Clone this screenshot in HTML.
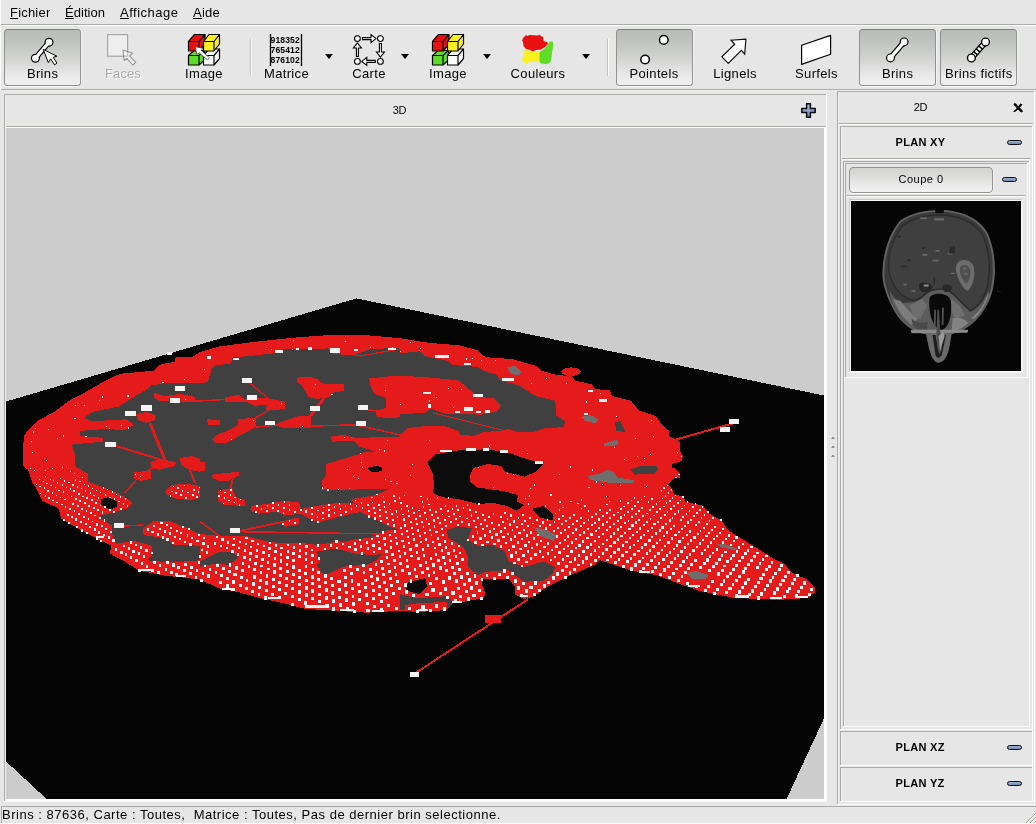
<!DOCTYPE html>
<html><head><meta charset="utf-8">
<style>
html,body{margin:0;padding:0;}
body{will-change:transform;width:1036px;height:824px;overflow:hidden;background:#e6e6e6;font-family:"Liberation Sans",sans-serif;font-size:13px;color:#000;position:relative;}
.a{position:absolute;}
.hl{position:absolute;height:1px;}
.vl{position:absolute;width:1px;}
.dk{background:#a9aca7;}
.wt{background:#fbfbfb;}
.menu{position:absolute;top:5px;font-size:13px;line-height:15px;letter-spacing:0.2px;white-space:nowrap;}
.menu u{text-decoration:underline;text-underline-offset:1px;text-decoration-thickness:1px;text-decoration-skip-ink:none;}
.tl{position:absolute;top:66px;font-size:13px;line-height:15px;text-align:center;white-space:nowrap;letter-spacing:0.35px;}
.tb{position:absolute;top:29px;height:55px;border:1px solid #8f928d;border-top-color:#7d807b;border-radius:3.5px;background:linear-gradient(#b9bbb8 0%,#c1c3c0 22%,#d4d5d3 55%,#e7e7e7 80%,#f0f0f0 100%);box-shadow:0 1px 0 #fafafa,1px 0 0 #f4f4f4;}
.arr{position:absolute;top:54px;width:0;height:0;border-left:4.5px solid transparent;border-right:4.5px solid transparent;border-top:5px solid #000;}
.ph{position:absolute;font-weight:bold;font-size:11px;line-height:13px;white-space:nowrap;letter-spacing:0.32px;}
.minus{position:absolute;width:13px;height:3px;border:1px solid #0c0c10;border-radius:2.5px;background:linear-gradient(#9fb3d0,#6f88ad);}
</style></head><body>
<!-- window edge -->
<div class="vl wt" style="left:0;top:0;height:90px"></div>
<!-- menubar -->
<div class="menu" style="left:10px"><u>F</u>ichier</div>
<div class="menu" style="left:65px;letter-spacing:0.05px"><u>É</u>dition</div>
<div class="menu" style="left:120px;letter-spacing:0.5px"><u>A</u>ffichage</div>
<div class="menu" style="left:193px"><u>A</u>ide</div>
<div class="hl dk" style="left:1px;top:24px;width:1035px"></div>
<div class="hl wt" style="left:1px;top:25px;width:1035px"></div>
<!-- toolbar -->
<div class="hl dk" style="left:1px;top:89px;width:1035px"></div>
<div class="hl" style="left:1px;top:90px;width:1035px;background:#f0f0f0"></div>
<div id="toolbar">
<div class="tb" style="left:4px;width:75px"></div>
<div class="tb" style="left:616px;width:75px"></div>
<div class="tb" style="left:859px;width:75px"></div>
<div class="tb" style="left:940px;width:75px"></div>
<div class="vl" style="left:250px;top:39px;height:37px;background:#c4c4c4"></div><div class="vl wt" style="left:251px;top:39px;height:37px"></div>
<div class="vl" style="left:607px;top:39px;height:37px;background:#c4c4c4"></div><div class="vl wt" style="left:608px;top:39px;height:37px"></div>
<div class="tl" style="left:12.600px;width:60px">Brins</div>
<div class="tl" style="left:93px;width:60px;letter-spacing:0.1px;color:#a9a9a9;text-shadow:1px 1px 0 #fff">Faces</div>
<div class="tl" style="left:174px;width:60px">Image</div>
<div class="tl" style="left:256.5px;width:60px">Matrice</div>
<div class="tl" style="left:339px;width:60px">Carte</div>
<div class="tl" style="left:418px;width:60px">Image</div>
<div class="tl" style="left:508px;width:60px">Couleurs</div>
<div class="tl" style="left:624px;width:60px">Pointels</div>
<div class="tl" style="left:705px;width:60px">Lignels</div>
<div class="tl" style="left:786.5px;width:60px">Surfels</div>
<div class="tl" style="left:867.6px;width:60px">Brins</div>
<div class="tl" style="left:938.8px;width:80px">Brins fictifs</div>
<div class="arr" style="left:325px"></div>
<div class="arr" style="left:401px"></div>
<div class="arr" style="left:483px"></div>
<div class="arr" style="left:582px"></div>
<svg class="a" style="left:0;top:26px" width="1036" height="63" viewBox="0 26 1036 63">
<defs>
<g id="cubes" stroke="#000" stroke-width="1.2" stroke-linejoin="round">
 <path d="M0.5,22.5h10.5v9.5h-10.5z M0.5,22.5l5.5,-5h10.5l-5.5,5z M11,22.5l5.5,-5v9.5l-5.5,5z" fill="#5fdc28"/>
 <path d="M15.5,22.5h10.5v9.5h-10.5z M15.5,22.5l5.5,-6.5h10.5l-5.5,6.5z M26,22.5l5.500,-6.5v9.5l-5.5,6.5z" fill="#fff"/>
 <path d="M0.500,8.500h10.500v9.500h-10.500z M0.500,8.500l6,-7h10.500l-6,7z M11,8.500l6,-7v9.500l-6,7z" fill="#e81010"/>
 <path d="M15.500,8.500h10.500v9.500h-10.500z M15.500,8.500l5.500,-7h10.500l-5.500,7z M26,8.500l5.500,-7v9.500l-5.500,7z" fill="#f8f020"/>
</g>
<g id="cursor"><path d="M0,0 L1.200,10.500 L3.800,8.300 L9.800,15 L12.800,12.300 L6.600,5.800 L9.600,3.200 Z" fill="#fff" stroke="#000" stroke-width="1.1" stroke-linejoin="round"/></g>
<g id="bone"><path d="M-6.800,8 L6.800,-8" stroke="#000" stroke-width="5.600" stroke-linecap="round"/><circle cx="6.800" cy="-8" r="4.500" fill="#000"/><circle cx="-6.800" cy="8" r="4.500" fill="#000"/><path d="M-6.800,8 L6.800,-8" stroke="#fff" stroke-width="3.300" stroke-linecap="round"/><circle cx="6.800" cy="-8" r="3.300" fill="#fff"/><circle cx="-6.800" cy="8" r="3.300" fill="#fff"/></g>
</defs>
<!-- Brins -->
<use href="#bone" x="42.200" y="50.200"/>
<path d="M43.200,49.400 L48.300,62.600 L50.600,58.900 L54.600,64.900 L57,63 L53.200,57.300 L56.900,56.200 Z" fill="#fff" stroke="#000" stroke-width="1" stroke-linejoin="round"/>
<!-- Faces -->
<rect x="107.600" y="34.600" width="20" height="21.600" fill="#eeeeee" stroke="#a6a6a6" stroke-width="1.200"/>
<g opacity="0.350"><use href="#cursor" x="123" y="50"/></g>
<!-- Image 1 -->
<use href="#cubes" x="188" y="33"/>
<g transform="translate(195,46.700) rotate(-4)"><path d="M0,0 L1.500,8.200 L3.600,6.200 L11.500,14 L13.600,12 L5.800,4 L7.800,2 Z" fill="#fff" stroke="#444" stroke-width="0.800"/></g>
<!-- Matrice -->
<path d="M270.500,34v32 M301.500,34v32" stroke="#000" stroke-width="1.300"/>
<g font-family="Liberation Sans" font-size="8.600" font-weight="bold" letter-spacing="0.100" fill="#000"><text x="270.600" y="43">918352</text><text x="270.600" y="53">765412</text><text x="270.600" y="63">876102</text></g>
<!-- Carte -->
<g fill="#fff" stroke="#000" stroke-width="1.100" stroke-linejoin="miter">
<circle cx="357.400" cy="38.600" r="2.900"/><circle cx="380.400" cy="38.600" r="2.900"/><circle cx="357.400" cy="61.400" r="2.900"/><circle cx="380.400" cy="61.400" r="2.900"/>
<path d="M362.500,37.600h8.500v-3l5,4l-5,4v-3h-8.500z"/>
<path d="M375.300,60.400h-8.500v-3l-5,4l5,4v-3h8.500z"/>
<path d="M379.400,43.500v8.500h-3l4,5l4,-5h-3v-8.500z"/>
<path d="M356.400,56.500v-8.500h-3l4,-5l4,5h-3v8.500z"/>
</g>
<!-- Image 2 -->
<use href="#cubes" x="432" y="33"/>
<!-- Couleurs -->
<path d="M526,35 L527.500,36 L529.500,35 L538,35.500 L539.500,34.500 L541,36 L543,37 L543.500,41 L547,42 L548,44 L545,47 L541,49.500 L536,50 L532.500,51.500 L530,50 L526,49 L523.500,46 L523,42 L522,41 L523,38 Z" fill="#e81010"/>
<path d="M524.500,50.500 L527,50 L531,51.500 L535,52 L539.500,52 L539.500,61.500 L533,62 L529,62 L527,64 L524,62.500 L522,60 L523,57 L524,54 Z" fill="#f8f020"/>
<path d="M551,41 L553,42 L553,47 L552,53 L551.500,58 L550,63 L546,64 L541,63.500 L539.500,62 L539.500,52 L543,50 L546,47 L549,43 Z" fill="#5fdc28"/>
<!-- Pointels -->
<circle cx="663.800" cy="39.900" r="4.300" fill="#fff" stroke="#000" stroke-width="1.500"/>
<circle cx="645.100" cy="59.500" r="4.300" fill="#fff" stroke="#000" stroke-width="1.500"/>
<!-- Lignels -->
<path d="M721.900,56.800 L734.700,44.300 L731.100,40.200 L745.900,39.200 L744.700,54 L741.300,50.400 L728.300,63.400 Z" fill="#fff" stroke="#111" stroke-width="1.200" stroke-linejoin="miter"/>
<!-- Surfels -->
<path d="M801.600,45.300 L830.600,35.400 L830.600,54.300 L801.600,64.400 Z" fill="#fff" stroke="#000" stroke-width="1.200" stroke-linejoin="round"/>
<!-- Brins right -->
<use href="#bone" x="897.300" y="49.900"/>
<!-- Brins fictifs -->
<g>
<path d="M971.400,58 L985.500,42" stroke="#000" stroke-width="6.200"/>
<path d="M971.400,58 L985.500,42" stroke="#fff" stroke-width="3.600" stroke-dasharray="2.300 1.500" stroke-dashoffset="-3.300"/>
<circle cx="985.500" cy="42" r="3.900" fill="#fff" stroke="#000" stroke-width="1.400"/><circle cx="971.400" cy="58" r="3.900" fill="#fff" stroke="#000" stroke-width="1.400"/>
</g>
</svg>
</div>
<!-- 3D frame -->
<div id="frame3d">
<!-- 3D frame: outer x4..826, y94..802 -->
<div class="hl dk" style="left:4px;top:94px;width:822px"></div>
<div class="vl dk" style="left:4px;top:94px;height:707px"></div>
<div class="vl wt" style="left:826px;top:94px;height:708px"></div>
<div class="hl wt" style="left:4px;top:801px;width:823px"></div>
<div class="vl" style="left:5px;top:95px;height:705px;background:#ededed"></div>
<div class="a" style="left:379.5px;top:104px;width:40px;text-align:center;font-size:11px;line-height:13px;letter-spacing:-0.3px">3D</div>
<div class="hl dk" style="left:6px;top:126px;width:819px"></div>
<div class="hl wt" style="left:6px;top:127px;width:819px"></div>
<div class="vl wt" style="left:824px;top:128px;height:673px"></div><div class="vl wt" style="left:825px;top:128px;height:673px"></div>
<div class="hl wt" style="left:6px;top:799px;width:820px;height:2px"></div>
<svg class="a" style="left:801px;top:103px" width="15" height="15" viewBox="0 0 15 15"><defs><linearGradient id="pg" x1="0" y1="0" x2="0" y2="1"><stop offset="0" stop-color="#a9bcd8"/><stop offset="1" stop-color="#6c86ad"/></linearGradient></defs><path d="M5.600,0.800h3.800v4.800h4.800v3.800h-4.800v4.800h-3.800v-4.800h-4.800v-3.800h4.800z" fill="url(#pg)" stroke="#0a0c12" stroke-width="1.500" stroke-linejoin="round"/></svg>
<div id="gl" class="a" style="left:6px;top:128px;width:818px;height:671px;background:#cccccc;overflow:hidden">
<svg class="a" style="left:0;top:0" width="818" height="671" viewBox="6 128 818 671" shape-rendering="crispEdges">
<path d="M6,401.5 L356.4,298.4 L824,395.5 L824,718.4 L786.6,799 L46.6,799 L6,761.4Z" fill="#050505"/>
<path d="M23.3,444.6 L24.3,434.9 L36.9,421.3 L54.4,411.6 L71.8,398.9 L85.4,392.1 L104.9,380.9 L120.4,373.7 L153.4,370.8 L161.2,364 L174.8,362 L175.7,357.2 L192.2,357.2 L200,352 L219.4,346.5 L248.5,342.6 L277.7,339.3 L297,337.4 L324.3,335.4 L369,335.4 L400,338.2 L427.2,342.6 L460.2,345.5 L477.7,350.4 L485.4,357.2 L512.6,359.1 L535.9,365.9 L541.7,370.8 L555.3,374.7 L572.8,376.6 L574.8,380.5 L592.2,384.4 L594.2,388.3 L600,389.5 L609.7,390.1 L611.7,395.9 L631,400.8 L638.8,410.5 L656.3,416.3 L662.1,425 L669,430.9 L669,435.7 L679.6,441.6 L680.6,453.2 L683,455 L681.6,461 L671.8,463.9 L672.2,467.8 L675.7,468.7 L679.6,473.6 L679.6,477.5 L673.8,478.4 L668,484.3 L671.8,488.2 L673.8,494 L683.5,496.9 L685.4,501.7 L702.9,505.6 L708.7,513.4 L721,520 L726.6,527.7 L731,532.2 L745.4,541 L759.9,549.9 L775.4,559.9 L784.3,563.3 L791,572.1 L807.6,579.9 L815.4,587.7 L815.4,592.1 L807.6,598 L777.6,599.9 L755.4,598.8 L733.2,597.7 L699.9,591 L677.7,583.2 L657.7,575.5 L628.9,569.9 L600,560 L594.2,565.1 L570.9,574.9 L547.6,586.5 L534,596.2 L524.3,599.1 L514.6,594.3 L514.6,586.5 L508.7,578.7 L483.5,578.7 L481.6,584.6 L485.4,592.3 L483.5,598.2 L450.5,604 L446.6,607.9 L415.5,611.7 L400,610.8 L367,612.7 L335.9,610.8 L304.9,608.8 L287.4,604 L264.1,599.1 L238.8,592.3 L219.4,588.4 L200,579.7 L186.4,577.8 L165,575.8 L151.5,572.9 L139.8,571 L124.3,561.3 L109.7,553.5 L111.7,545.7 L101,540.9 L77.7,528.3 L61.2,518.5 L58.3,507.9 L42.7,501.1 L37.9,491.4 L32,481.7 L28.2,470 L22.9,465.9Z" fill="#e51a1a"/>
<ellipse cx="570.9" cy="371.7" rx="9.7" ry="4.3" fill="#e51a1a"/>
<path d="M151.5,385.3 L165,383.4 L200,383 L207.8,382.4 L211.7,368.8 L215.5,365 L231,364 L233,357.2 L248.5,356.2 L273.8,353.3 L281.6,349.4 L308.7,349.4 L328.2,348.4 L332,353.3 L345.6,355.2 L359.2,353.3 L369,349.4 L400,347.5 L400,353.3 L419.4,351.4 L425.2,356.2 L448.5,361.1 L452.4,365 L477.7,366.9 L483.5,370.8 L497.1,374.7 L499,379.5 L520.4,386.3 L535.9,396 L555.3,400.9 L556.3,415.4 L565,421.3 L564.1,427.1 L545.6,428.1 L534,431.9 L518.4,432.5 L508.7,429 L501,431 L483.5,431.9 L473.8,435.8 L460.2,434.9 L458.3,431 L444.7,426.1 L425.2,426.1 L407.8,428 L400,434.9 L400,530.2 L388.3,530 L370,538 L355.3,539 L345,542 L335.9,541 L326,543.8 L316.5,544.8 L301,542.8 L277.7,542.8 L264,540.9 L246.6,536 L219.4,536 L200,534 L200,560.3 L174.8,562.2 L155.3,561.3 L147.6,560.3 L151.5,555.4 L151.5,545.7 L134,540.9 L116.5,543.8 L112.6,536 L111.7,525.3 L101,518.5 L99,515.6 L112.6,512.7 L126.2,508.8 L133,503 L126.2,498.1 L118.4,493.3 L108.7,489.4 L88.3,481.7 L88.3,470 L87.4,473.7 L74.8,466 L74.8,454.3 L71.8,444.6 L102.9,441.7 L102.9,437.8 L79.6,435.8 L80.6,431 L102.9,429 L124.3,430 L134,425 L126.2,419.3 L108.7,420.3 L91.3,421.3 L84.5,417.4 L93.2,411.6 L118.4,406.7 L132,398 L145.6,390.2Z" fill="#404040"/>
<path d="M446.6,530.2 L458.3,526.3 L471.8,528.3 L468,539.9 L477.7,545.7 L493.2,544.8 L504.9,551.6 L508.7,561.3 L524.3,567.1 L543.7,561.3 L555.3,567.1 L551.5,574.9 L543.7,580.7 L524.3,581.7 L514.6,574.9 L508.7,570 L485.4,571.9 L477.7,574.9 L468,567.1 L468,557.4 L464.1,547.7 L448.5,538Z" fill="#404040"/>
<path d="M316.5,551.6 L335.9,548.6 L355.3,553.5 L374.8,555.4 L382.5,553.5 L374.8,561.3 L365,565.1 L345.6,566.1 L334,571 L324.3,575.8 L316.5,565.1 L320.4,561.3Z" fill="#404040"/>
<path d="M200,561.3 L219.4,551.6 L233,552.5 L238.8,557.4 L229.1,565.1 L217.5,563.2 L200,567Z" fill="#404040"/>
<path d="M400,594.3 L415.5,598.2 L446.6,596.2 L454.4,602 L446.6,609.8 L419.4,611.7 L400,609.8Z" fill="#404040"/>
<path d="M400,464 L413.6,464 L413.6,477.6 L400,477.6Z" fill="#404040"/>
<path d="M630.1,469.7 L638.8,466.4 L656.3,465.8 L658.3,468.7 L654.4,473.6 L635,474.6Z" fill="#404040"/>
<path d="M615.1,422.1 L620,421 L625.2,431.8 L616,431Z" fill="#404040"/>
<path d="M507,367 L515,366 L522,372 L517,375.6 L510,373Z" fill="#6e6e6e"/>
<path d="M580.5,417 L590,415 L598.5,419 L596,423.4 L586,421Z" fill="#6e6e6e"/>
<path d="M600,473.6 L607.8,469.7 L613.6,471.7 L617.5,477.5 L634,480.4 L633,483.3 L613.6,483.3 L600,481.4 L590,480 L588,476Z" fill="#6e6e6e"/>
<path d="M603.9,443.5 L617.5,439.6 L618.4,443.5 L613.6,446.4 L603.9,446.4Z" fill="#6e6e6e"/>
<path d="M534,527.3 L547.6,530.2 L557.3,536 L553.4,540.9 L539.8,536Z" fill="#6e6e6e"/>
<path d="M686.6,573 L697,571 L708.8,575 L706,578.8 L692,578.8Z" fill="#6e6e6e"/>
<path d="M715.5,543.3 L726,544.5 L737.7,549 L736,550.5 L722,547.5Z" fill="#6e6e6e"/>
<path d="M297.1,377.6 L308.7,376.6 L318.4,379.5 L321.4,383.4 L343.7,384.4 L343.7,391.2 L334,392.1 L330.1,397 L316.5,399 L308.7,397 L304.9,390.2 L301,384.4 L297.1,382.4Z" fill="#e51a1a"/>
<path d="M369,378.5 L386.4,376.6 L400,375.6 L431.1,377.6 L458.3,380.5 L466,386.3 L477.7,397 L493.2,398 L501,405.7 L497.1,411.6 L477.7,415.4 L473.8,413.5 L444.7,413.5 L431.1,408.6 L425.2,412.5 L400,414.5 L400,417.4 L386.4,418.3 L376.7,416.4 L375.7,411.6 L386.4,407.7 L386.4,398 L374.8,394.1 L370.9,386.3Z" fill="#e51a1a"/>
<path d="M225.2,397 L238.8,395 L244.7,399 L268,398 L285.4,401.8 L284.5,408.6 L273.8,410.6 L266,409.6 L267,404.8 L254.4,405.7 L246.6,401.8 L225.2,401.8Z" fill="#e51a1a"/>
<path d="M277.7,423.2 L297.1,416.4 L310.7,415.4 L310.7,428 L283.5,428 L277.7,426.1Z" fill="#e51a1a"/>
<path d="M237.9,419.3 L256.3,417.4 L256.3,427 L244.7,433 L225.2,443.6 L215.5,442.6 L211.7,439.7 L216.5,434.9 L227.2,431 L237.9,425.1Z" fill="#e51a1a"/>
<path d="M206.8,419.3 L220.4,420 L220.4,425.1 L208,424.5Z" fill="#e51a1a"/>
<path d="M200,462 L205,462 L205,471 L200,471Z" fill="#e51a1a"/>
<path d="M136,414 L146,412 L156,415 L155,420 L146,423 L138,420Z" fill="#e51a1a"/>
<path d="M154,393 L165,396 L180,394 L195,397 L195,401 L180,402 L160,401 L154,398Z" fill="#e51a1a"/>
<path d="M150,462 L160,459 L176,462 L175,466 L165,468 L160,470 L152,468Z" fill="#e51a1a"/>
<path d="M134,472 L150.5,471 L150.5,479 L140,481 L134,479Z" fill="#e51a1a"/>
<path d="M180,458 L192,456 L200,459 L200,472 L190,470 L181,465Z" fill="#e51a1a"/>
<path d="M330.1,436.8 L343.7,434.9 L355.3,437.8 L400,436.8 L400,434.9 L407.8,428 L425.2,426.1 L444.7,426.1 L458.3,431 L460.2,434.9 L473.8,435.8 L483.5,431.9 L501,431 L508.7,429 L518.4,432.5 L520,450 L435,454.3 L427.2,462 L433,473.7 L434,490 L400,490 L400,530.2 L388.3,526.3 L374.8,518.5 L361.2,512.7 L351.5,499.1 L374.8,495.2 L390,489 L322.3,490 L322.3,480.5 L326.2,475.6 L326.2,464 L345.6,458.2 L365,452.3 L374.8,451.4 L359.2,446.5 L353.4,440.7 L332,441.7Z" fill="#e51a1a"/>
<path d="M250.5,505.9 L266,504 L283.5,501.1 L299,502 L301,508.8 L316.5,505.9 L335.9,503 L351.5,503 L361.2,505 L361.2,511.7 L339.8,516.6 L318.4,522.4 L308.7,518.5 L301,513.7 L285.4,515.6 L277.7,511.7 L258.3,513.7 L250.5,510.8Z" fill="#e51a1a"/>
<path d="M211.7,474.7 L238.8,471.7 L238.8,475.6 L233,478.5 L227.2,481.5 L217.5,480.5 L211.7,477.6Z" fill="#e51a1a"/>
<path d="M218.4,490 L232,488.4 L236,497 L244.7,500 L244.7,505.9 L225,505 L218.4,501Z" fill="#e51a1a"/>
<path d="M165,491 L172,485 L185,483.6 L200,486 L200,498 L190,500 L178,499 L168,496Z" fill="#e51a1a"/>
<path d="M142.7,528.3 L153.4,521.5 L168.9,520.5 L186.4,528.3 L200,534 L200,545.7 L174.8,544.8 L163.1,538 L143.7,535Z" fill="#e51a1a"/>
<path d="M290,520 L299,518 L299,524 L285,527 L283,524Z" fill="#e51a1a"/>
<path d="M405,605 L420,603 L447,602 L447,610 L419.4,612 L405,611Z" fill="#e51a1a"/>
<path d="M435,454.3 L458.3,450.4 L483.5,449.4 L504.9,451.4 L524.3,458.2 L543.7,464 L535.9,471.7 L524.3,476.6 L504.9,471.7 L501,465.9 L487.4,464 L473.8,467.9 L469.9,475.6 L469.9,481.7 L477.7,487.5 L504.9,491.4 L518.4,495.2 L516.5,501.1 L524.3,505 L516.5,510.8 L506.8,505.9 L493.2,503 L477.7,504 L458.3,499.1 L442.7,497.2 L433,493.3 L434,485.5 L433,473.7 L427.2,462Z" fill="#0c0c0c"/>
<path d="M532,508.8 L543.7,505.9 L553.4,514.7 L553.4,520.5 L539.8,517.6Z" fill="#0c0c0c"/>
<path d="M407.8,582.6 L425.2,577.8 L427.2,586.5 L419.4,594.3 L405.8,590.4Z" fill="#0c0c0c"/>
<path d="M101,499.1 L108.7,497.2 L116.5,501.1 L116.5,506.9 L110.7,509.8 L101,505Z" fill="#0c0c0c"/>
<path d="M367,468 L375,466 L382.5,467 L382,471 L372,472.5Z" fill="#0c0c0c"/>
<path d="M200,400.9 L225.2,399.5" stroke="#e51a1a" stroke-width="1.5"/>
<path d="M246.6,380.5 L268,398" stroke="#e51a1a" stroke-width="1.5"/>
<path d="M310.7,415.4 L324.3,398" stroke="#e51a1a" stroke-width="3"/>
<path d="M310.7,426.1 L355.3,424.8" stroke="#e51a1a" stroke-width="1.5"/>
<path d="M355.3,424.8 L400,434.9" stroke="#e51a1a" stroke-width="1.5"/>
<path d="M256.3,417.4 L270,409.6" stroke="#e51a1a" stroke-width="1.5"/>
<path d="M256.3,427 L277.7,425" stroke="#e51a1a" stroke-width="1.5"/>
<path d="M233,478.5 L230,490" stroke="#e51a1a" stroke-width="2"/>
<path d="M135.9,480.7 L124.3,493.3" stroke="#e51a1a" stroke-width="1.5"/>
<path d="M124.3,526 L143,525" stroke="#e51a1a" stroke-width="1.5"/>
<path d="M239.8,531 L299,518.5" stroke="#e51a1a" stroke-width="2"/>
<path d="M239.8,531.7 L394.2,534.1" stroke="#e51a1a" stroke-width="1.5"/>
<path d="M200,521.5 L219.4,536" stroke="#e51a1a" stroke-width="1.5"/>
<path d="M675.7,439.6 L734,423.1" stroke="#e51a1a" stroke-width="2"/>
<path d="M528.2,599.1 L414,674" stroke="#e51a1a" stroke-width="2"/>
<path d="M150,423 L165,460" stroke="#e51a1a" stroke-width="3"/>
<path d="M113,445 L165,461" stroke="#e51a1a" stroke-width="2"/>
<path d="M165,461 L142,474" stroke="#e51a1a" stroke-width="1.5"/>
<path d="M362,409 L386,412" stroke="#e51a1a" stroke-width="1.5"/>
<path d="M433,413 L510,432" stroke="#e51a1a" stroke-width="1.2"/>
<path d="M339,351 L360,356" stroke="#e51a1a" stroke-width="1.2"/>
<path d="M360,356 L400,349" stroke="#e51a1a" stroke-width="1.2"/>
<path d="M176,401 L200,400.9" stroke="#e51a1a" stroke-width="1.5"/>
<path d="M190,470 L195,483" stroke="#e51a1a" stroke-width="2"/>
<rect x="484.5" y="614.7" width="16" height="8" fill="#e51a1a"/>
<path d="M494.9,360.1h1.0v1.0h-1.0zM410.4,341.7h1.0v1.0h-1.0zM472.3,358.0h1.0v1.1h-1.0zM480.8,360.0h1.0v1.0h-1.0zM420.4,348.1h1.0v1.0h-1.0zM465.6,358.4h1.0v1.3h-1.0zM546.4,377.7h1.0v1.1h-1.0zM565.8,383.0h1.1v1.3h-1.1zM599.7,393.1h1.0v1.3h-1.0zM391.6,347.0h1.1v1.3h-1.1zM399.6,350.6h1.0v1.2h-1.0zM511.5,378.1h1.2v1.0h-1.2zM530.8,382.5h1.0v1.2h-1.0zM344.9,341.1h1.0v1.0h-1.0zM370.3,347.3h1.0v1.0h-1.0zM585.7,401.4h1.2v1.2h-1.2zM651.2,419.5h1.0v1.2h-1.0zM616.0,416.2h1.1v1.0h-1.1zM293.0,340.2h1.0v1.0h-1.0zM652.8,436.3h1.1v1.0h-1.1zM310.4,348.5h1.2v1.1h-1.2zM461.3,388.8h1.0v1.1h-1.0zM448.4,387.7h1.0v1.3h-1.0zM635.2,438.0h1.1v1.1h-1.1zM292.4,348.6h1.0v1.1h-1.0zM677.0,451.9h1.0v1.2h-1.0zM680.8,456.1h1.0v1.0h-1.0zM270.5,349.1h1.2v1.2h-1.2zM649.7,453.6h1.0v1.1h-1.0zM435.9,397.4h1.0v1.0h-1.0zM614.2,446.7h1.0v1.3h-1.0zM636.8,455.7h1.0v1.3h-1.0zM643.7,457.7h1.0v1.0h-1.0zM429.2,400.3h1.0v1.2h-1.0zM453.0,407.4h1.0v1.0h-1.0zM384.5,390.2h1.2v1.0h-1.2zM624.3,458.9h1.0v1.3h-1.0zM678.4,474.3h1.1v1.0h-1.1zM675.4,476.8h1.2v1.1h-1.2zM400.0,403.6h1.0v1.4h-1.0zM666.5,484.5h1.3v1.6h-1.3zM314.5,383.8h1.0v1.3h-1.0zM663.4,487.3h1.3v1.6h-1.3zM670.7,489.4h1.2v1.2h-1.2zM592.2,469.3h1.0v1.3h-1.0zM645.9,485.9h1.4v1.3h-1.4zM660.8,490.2h1.0v1.4h-1.0zM667.5,492.3h1.5v1.3h-1.5zM674.9,494.5h1.3v1.6h-1.3zM682.4,495.9h1.6v1.8h-1.6zM331.3,394.0h1.2v1.2h-1.2zM526.8,452.9h1.0v1.1h-1.0zM570.1,466.3h1.0v1.2h-1.0zM664.5,494.8h1.1v1.7h-1.1zM671.8,497.1h1.5v1.8h-1.5zM679.8,499.5h1.5v1.5h-1.5zM686.8,501.3h1.4v2.0h-1.4zM694.6,503.3h1.7v1.8h-1.7zM701.5,505.5h1.9v2.0h-1.9zM488.5,445.3h1.1v1.3h-1.1zM619.6,484.5h1.0v1.6h-1.0zM661.7,497.6h1.5v1.5h-1.5zM668.9,500.1h1.8v1.5h-1.8zM676.7,502.3h1.8v1.7h-1.8zM683.8,504.8h1.3v1.6h-1.3zM692.0,506.3h1.5v2.0h-1.5zM699.3,509.2h1.8v2.0h-1.8zM707.1,511.2h1.5v1.6h-1.5zM595.9,481.3h1.1v1.3h-1.1zM602.3,483.6h1.0v1.5h-1.0zM643.8,495.6h1.2v1.7h-1.2zM651.4,497.9h1.5v1.6h-1.5zM658.7,500.5h1.4v1.5h-1.4zM665.5,502.3h1.8v1.7h-1.8zM673.3,505.4h1.6v1.5h-1.6zM681.0,507.5h1.5v1.8h-1.5zM688.6,509.8h1.8v2.2h-1.8zM695.8,512.2h1.9v1.7h-1.9zM703.7,514.4h1.5v1.8h-1.5zM712.0,517.1h1.6v2.2h-1.6zM720.1,519.1h1.9v1.8h-1.9zM559.4,473.9h1.0v1.2h-1.0zM633.7,497.0h1.5v1.5h-1.5zM640.6,498.6h1.3v1.5h-1.3zM647.6,501.2h1.4v1.7h-1.4zM655.5,503.4h1.6v1.7h-1.6zM662.9,505.5h1.6v1.5h-1.6zM670.4,508.0h1.9v2.0h-1.9zM677.5,510.4h1.8v2.2h-1.8zM685.6,512.9h1.6v2.1h-1.6zM692.7,515.2h1.8v1.8h-1.8zM700.6,517.3h1.7v1.8h-1.7zM708.8,520.2h1.5v1.9h-1.5zM588.3,486.7h1.2v1.4h-1.2zM630.6,499.6h1.4v1.7h-1.4zM637.3,501.4h1.5v1.7h-1.5zM652.3,506.1h1.4v1.8h-1.4zM659.4,508.2h1.8v2.0h-1.8zM666.8,510.6h1.4v2.2h-1.4zM674.4,513.2h1.5v1.7h-1.5zM682.0,516.1h2.0v1.8h-2.0zM689.9,518.7h1.7v1.8h-1.7zM698.4,520.9h1.7v2.3h-1.7zM705.6,523.0h2.2v2.2h-2.2zM713.6,526.1h2.1v2.0h-2.1zM721.8,527.9h2.2v2.2h-2.2zM203.7,369.1h1.1v1.1h-1.1zM428.9,439.9h1.1v1.0h-1.1zM605.6,495.8h1.5v1.3h-1.5zM620.1,500.4h1.2v1.7h-1.2zM627.2,502.2h1.4v1.7h-1.4zM633.8,504.9h1.9v1.7h-1.9zM641.4,507.2h1.4v1.7h-1.4zM649.0,509.0h1.7v1.9h-1.7zM656.4,511.3h2.0v2.0h-2.0zM664.2,513.8h1.8v2.1h-1.8zM671.6,516.9h1.6v1.7h-1.6zM679.5,518.9h2.1v2.1h-2.1zM686.9,521.3h1.9v2.3h-1.9zM695.0,523.8h1.8v2.1h-1.8zM703.3,526.5h1.7v2.1h-1.7zM710.8,528.9h1.9v2.3h-1.9zM719.4,531.6h1.9v2.4h-1.9zM727.7,534.4h2.2v2.2h-2.2zM735.3,536.2h2.4v2.4h-2.4zM608.8,500.5h1.5v1.4h-1.5zM623.3,505.7h1.4v1.5h-1.4zM630.6,507.9h1.9v2.1h-1.9zM637.7,510.2h1.9v1.9h-1.9zM645.9,512.6h1.6v1.7h-1.6zM652.5,514.5h2.0v1.7h-2.0zM660.2,516.7h1.9v2.1h-1.9zM668.7,519.3h1.9v2.2h-1.9zM683.7,525.0h1.9v2.0h-1.9zM699.6,529.5h1.8v2.1h-1.8zM708.3,531.7h1.8v2.4h-1.8zM716.0,535.0h2.3v2.4h-2.3zM724.9,537.7h2.1v2.4h-2.1zM732.6,540.0h2.2v2.3h-2.2zM741.8,542.6h2.0v2.7h-2.0zM750.0,545.5h2.5v2.6h-2.5zM507.1,472.5h1.0v1.0h-1.0zM513.1,474.2h1.0v1.1h-1.0zM606.0,503.8h1.5v1.6h-1.5zM620.2,508.2h1.7v1.9h-1.7zM627.3,510.7h1.9v2.1h-1.9zM635.1,513.2h1.7v2.1h-1.7zM642.0,515.0h1.9v2.0h-1.9zM649.5,517.6h1.8v2.0h-1.8zM656.9,520.5h2.0v2.2h-2.0zM664.6,522.6h2.2v2.4h-2.2zM672.7,524.7h1.9v2.2h-1.9zM680.9,527.8h1.8v2.1h-1.8zM689.0,530.4h2.1v2.2h-2.1zM696.5,532.9h2.3v2.5h-2.3zM705.2,535.1h2.4v2.3h-2.4zM713.1,537.8h2.2v2.3h-2.2zM721.8,541.1h2.3v2.6h-2.3zM729.5,543.5h2.4v2.3h-2.4zM738.1,546.1h2.2v2.7h-2.2zM746.7,548.6h2.4v2.9h-2.4zM756.2,551.6h2.6v2.5h-2.6zM765.1,554.5h2.5v2.7h-2.5zM280.6,402.7h1.0v1.0h-1.0zM478.4,467.0h1.0v1.0h-1.0zM534.0,484.4h1.0v1.3h-1.0zM580.6,499.4h1.5v1.6h-1.5zM608.9,509.1h1.6v1.9h-1.6zM616.8,511.6h1.9v1.8h-1.9zM623.6,513.8h1.5v2.0h-1.5zM630.8,516.1h1.8v2.3h-1.8zM638.4,518.6h1.6v2.0h-1.6zM646.2,521.0h1.8v2.2h-1.8zM653.4,523.0h2.2v2.1h-2.2zM661.3,526.2h2.2v2.3h-2.2zM669.8,528.0h1.8v2.2h-1.8zM678.0,530.7h2.0v2.5h-2.0zM685.5,533.8h2.3v2.6h-2.3zM693.2,536.1h2.4v2.5h-2.4zM701.8,538.9h2.1v2.4h-2.1zM710.2,541.4h2.1v2.5h-2.1zM735.8,549.9h2.3v2.9h-2.3zM744.3,552.3h2.3v3.0h-2.3zM753.4,555.3h2.4v3.0h-2.4zM761.9,558.1h2.4v2.9h-2.4zM770.6,560.8h2.7v3.1h-2.7zM780.1,564.2h2.7v3.1h-2.7zM386.6,440.1h1.1v1.1h-1.1zM530.0,487.5h1.4v1.6h-1.4zM550.2,494.1h1.3v1.4h-1.3zM570.1,500.8h1.5v1.5h-1.5zM577.2,502.5h1.5v1.5h-1.5zM584.2,505.0h1.3v1.5h-1.3zM598.8,509.3h1.8v1.9h-1.8zM605.9,511.7h1.7v1.9h-1.7zM613.0,514.4h1.7v1.9h-1.7zM620.3,516.2h1.5v2.3h-1.5zM627.5,519.5h1.8v2.0h-1.8zM635.1,521.4h1.8v2.4h-1.8zM642.8,523.9h2.0v2.3h-2.0zM650.8,526.5h2.1v2.2h-2.1zM658.9,529.4h1.7v2.1h-1.7zM666.0,531.4h2.1v2.3h-2.1zM674.3,534.0h2.2v2.2h-2.2zM682.2,536.9h2.0v2.5h-2.0zM690.1,539.3h2.2v2.6h-2.2zM698.9,542.3h2.3v2.6h-2.3zM707.1,545.1h2.3v2.8h-2.3zM715.7,547.7h2.3v3.0h-2.3zM724.3,551.0h2.5v2.4h-2.5zM732.4,553.5h2.3v3.0h-2.3zM741.4,556.3h2.2v3.1h-2.2zM749.9,559.3h2.6v3.1h-2.6zM758.9,561.6h2.3v2.9h-2.3zM768.1,564.8h2.4v2.8h-2.4zM777.7,567.7h3.0v3.3h-3.0zM787.0,571.0h2.6v3.4h-2.6zM796.2,574.0h2.6v3.4h-2.6zM559.2,501.4h1.5v1.5h-1.5zM580.7,507.7h1.5v1.7h-1.5zM587.5,509.9h1.8v1.8h-1.8zM594.7,512.9h1.8v1.7h-1.8zM601.5,514.6h2.0v2.2h-2.0zM609.3,517.3h1.7v1.8h-1.7zM617.0,520.0h1.8v2.0h-1.8zM624.1,522.1h1.7v1.9h-1.7zM631.4,524.2h2.1v2.5h-2.1zM639.3,527.0h1.9v2.5h-1.9zM646.9,529.8h2.3v2.3h-2.3zM654.6,532.3h2.3v2.3h-2.3zM662.9,534.9h2.1v2.5h-2.1zM671.3,537.2h2.0v2.5h-2.0zM678.4,540.3h2.4v2.8h-2.4zM686.7,542.8h2.5v2.6h-2.5zM695.5,545.9h2.5v2.5h-2.5zM703.8,548.6h2.1v2.7h-2.1zM712.2,551.5h2.2v2.8h-2.2zM720.5,554.2h2.5v3.0h-2.5zM729.6,557.0h2.8v2.6h-2.8zM738.3,559.5h2.5v2.9h-2.5zM747.2,562.6h2.5v3.3h-2.5zM756.2,566.1h3.0v2.9h-3.0zM764.9,568.4h2.9v3.0h-2.9zM774.4,572.1h3.0v3.0h-3.0zM784.0,575.2h2.6v3.2h-2.6zM793.4,577.5h2.7v3.3h-2.7zM802.9,581.3h3.2v3.2h-3.2zM183.6,379.3h1.0v1.0h-1.0zM528.9,494.9h1.2v1.7h-1.2zM562.4,506.7h1.5v1.7h-1.5zM591.1,515.9h2.0v1.9h-2.0zM598.0,518.2h2.0v2.3h-2.0zM605.9,520.8h1.7v2.0h-1.7zM612.7,523.1h2.0v2.0h-2.0zM620.3,525.8h1.8v2.0h-1.8zM628.4,527.9h2.2v2.2h-2.2zM635.8,530.6h2.0v2.0h-2.0zM643.1,533.6h2.3v2.3h-2.3zM651.2,536.1h2.0v2.1h-2.0zM659.2,538.9h2.2v2.3h-2.2zM667.0,541.2h2.5v2.8h-2.5zM675.7,543.7h2.4v2.8h-2.4zM683.7,546.4h2.1v2.7h-2.1zM692.4,549.3h2.5v2.7h-2.5zM700.5,551.8h2.7v2.9h-2.7zM709.0,555.2h2.4v2.6h-2.4zM718.1,558.0h2.6v3.0h-2.6zM726.3,560.2h2.6v3.1h-2.6zM735.4,564.0h2.8v2.8h-2.8zM744.2,567.0h2.5v3.1h-2.5zM762.1,573.0h3.0v3.3h-3.0zM771.5,575.7h2.6v3.2h-2.6zM781.4,579.1h3.2v3.3h-3.2zM790.8,581.9h2.8v3.3h-2.8zM800.4,585.7h3.0v3.3h-3.0zM809.8,588.2h2.9v3.2h-2.9zM344.0,437.2h1.0v1.1h-1.0zM378.5,448.8h1.0v1.3h-1.0zM383.8,450.2h1.0v1.3h-1.0zM493.2,486.7h1.1v1.4h-1.1zM524.6,497.8h1.3v1.4h-1.3zM544.7,504.9h1.5v1.7h-1.5zM558.6,508.8h1.5v1.7h-1.5zM573.2,514.0h1.5v2.1h-1.5zM580.1,516.7h2.1v1.9h-2.1zM587.5,518.7h1.9v2.2h-1.9zM594.3,521.5h1.7v2.2h-1.7zM602.1,523.3h1.8v2.3h-1.8zM608.9,526.0h2.1v2.1h-2.1zM616.6,528.2h2.0v2.5h-2.0zM624.1,531.6h2.3v2.1h-2.3zM632.0,534.1h2.2v2.1h-2.2zM639.7,536.3h2.1v2.4h-2.1zM648.2,539.1h2.4v2.6h-2.4zM655.9,541.6h2.0v2.5h-2.0zM663.9,544.9h2.1v2.5h-2.1zM672.6,547.7h2.3v2.6h-2.3zM680.3,549.7h2.4v2.9h-2.4zM688.6,552.7h2.4v2.9h-2.4zM706.3,558.4h2.5v3.1h-2.5zM714.9,561.5h2.7v3.1h-2.7zM723.3,564.5h2.7v2.9h-2.7zM732.1,567.7h3.0v3.3h-3.0zM741.5,570.3h3.0v3.2h-3.0zM759.4,576.8h3.1v3.4h-3.1zM768.8,579.4h3.1v3.3h-3.1zM778.7,582.7h3.1v3.2h-3.1zM788.3,586.5h3.0v3.4h-3.0zM797.3,589.5h3.0v3.2h-3.0zM807.5,592.6h3.0v3.4h-3.0zM301.5,426.0h1.1v1.2h-1.1zM412.2,463.8h1.0v1.3h-1.0zM527.6,503.2h1.4v1.7h-1.4zM554.7,512.5h1.5v1.6h-1.5zM562.0,514.7h1.8v2.0h-1.8zM569.1,516.7h1.8v2.1h-1.8zM576.0,519.7h1.7v1.8h-1.7zM583.1,522.0h1.7v2.3h-1.7zM590.8,524.2h1.7v2.0h-1.7zM598.2,527.1h2.2v2.1h-2.2zM606.1,528.8h1.9v2.6h-1.9zM613.2,532.4h2.0v2.2h-2.0zM620.3,535.0h2.3v2.3h-2.3zM628.6,537.0h2.0v2.2h-2.0zM636.5,539.7h2.1v2.6h-2.1zM644.2,542.9h2.4v2.7h-2.4zM652.3,545.0h2.3v2.6h-2.3zM660.9,548.5h2.4v2.4h-2.4zM668.8,551.2h2.5v2.6h-2.5zM676.8,553.7h2.5v2.9h-2.5zM685.6,556.2h2.8v2.7h-2.8zM694.2,559.2h2.3v2.7h-2.3zM703.1,561.9h2.4v3.0h-2.4zM711.7,565.1h2.8v3.0h-2.8zM720.5,568.6h3.0v3.0h-3.0zM728.8,571.5h2.8v3.4h-2.8zM737.8,574.7h3.0v3.3h-3.0zM747.1,577.6h3.1v3.4h-3.1zM757.0,580.6h3.1v3.1h-3.1zM765.9,583.8h3.0v3.4h-3.0zM775.9,587.3h3.0v3.2h-3.0zM785.6,590.0h3.2v3.4h-3.2zM794.5,594.1h3.2v3.4h-3.2zM162.3,381.5h1.2v1.0h-1.2zM557.8,517.5h1.8v2.1h-1.8zM564.7,519.5h1.8v2.4h-1.8zM572.3,522.5h1.8v2.1h-1.8zM580.0,524.8h1.6v2.4h-1.6zM587.3,528.0h1.9v2.0h-1.9zM594.6,530.0h1.9v2.4h-1.9zM602.2,532.9h1.9v2.5h-1.9zM609.6,535.1h2.2v2.7h-2.2zM616.9,538.2h1.9v2.6h-1.9zM625.3,540.6h2.2v2.8h-2.2zM632.6,543.7h2.3v2.5h-2.3zM640.8,546.2h2.1v2.5h-2.1zM648.6,548.9h2.3v2.9h-2.3zM656.8,551.6h2.7v3.0h-2.7zM665.5,554.3h2.4v2.9h-2.4zM673.5,557.1h2.3v2.9h-2.3zM681.8,560.3h2.8v2.9h-2.8zM690.4,563.2h2.8v2.8h-2.8zM699.1,565.9h2.5v2.9h-2.5zM708.1,569.0h2.7v3.3h-2.7zM716.9,572.4h3.0v3.4h-3.0zM726.0,575.1h3.1v3.3h-3.1zM735.1,578.5h2.7v3.4h-2.7zM744.0,581.4h3.0v3.2h-3.0zM753.8,584.8h3.0v3.1h-3.0zM763.5,588.1h2.9v3.3h-2.9zM772.6,591.2h2.9v3.3h-2.9zM782.7,594.8h3.2v3.4h-3.2zM359.9,453.4h1.1v1.0h-1.1zM546.5,518.8h1.6v1.9h-1.6zM553.5,521.0h1.8v2.1h-1.8zM560.7,522.8h2.1v2.4h-2.1zM568.0,525.5h2.1v2.1h-2.1zM575.4,528.0h2.0v2.5h-2.0zM582.7,530.9h2.2v2.6h-2.2zM590.4,533.2h2.3v2.5h-2.3zM597.7,535.6h2.4v2.6h-2.4zM605.8,538.9h2.5v2.2h-2.5zM613.4,541.0h2.3v2.5h-2.3zM621.5,544.3h2.0v2.4h-2.0zM628.7,546.3h2.5v2.9h-2.5zM637.1,549.9h2.6v2.5h-2.6zM645.5,552.2h2.5v3.0h-2.5zM653.8,555.3h2.4v3.1h-2.4zM662.0,558.0h2.7v2.9h-2.7zM670.2,561.3h2.7v2.9h-2.7zM678.9,564.3h2.9v2.7h-2.9zM687.0,567.2h2.9v2.9h-2.9zM722.5,579.4h2.7v3.1h-2.7zM731.6,582.8h2.8v3.4h-2.8zM741.0,585.7h3.1v3.4h-3.1zM750.8,589.2h3.2v3.4h-3.2zM759.9,592.2h2.8v3.4h-2.8zM252.7,419.5h1.0v1.0h-1.0zM409.5,474.8h1.0v1.4h-1.0zM522.3,514.4h1.6v2.0h-1.6zM528.6,516.9h2.0v2.0h-2.0zM535.6,519.2h2.0v1.8h-2.0zM542.2,521.4h2.1v2.1h-2.1zM549.4,524.3h1.9v1.9h-1.9zM557.3,526.7h1.8v2.4h-1.8zM564.4,528.8h1.7v2.4h-1.7zM571.6,532.1h2.0v2.2h-2.0zM578.7,533.9h1.9v2.5h-1.9zM586.2,536.8h2.4v2.3h-2.4zM594.0,539.7h2.1v2.6h-2.1zM601.8,542.5h2.0v2.6h-2.0zM609.4,544.5h2.4v2.7h-2.4zM617.3,547.8h2.5v2.7h-2.5zM625.4,550.5h2.4v2.5h-2.4zM633.1,552.9h2.7v2.8h-2.7zM641.7,556.6h2.6v2.7h-2.6zM649.8,559.3h2.8v2.9h-2.8zM657.8,561.5h2.5v3.3h-2.5zM666.9,564.9h2.8v3.1h-2.8zM675.2,567.5h2.5v2.8h-2.5zM684.1,570.8h2.9v3.0h-2.9zM710.7,579.7h3.0v3.2h-3.0zM719.6,582.9h2.9v3.4h-2.9zM728.4,586.8h3.1v3.4h-3.1zM738.0,590.3h3.1v3.4h-3.1zM747.7,592.8h3.2v3.4h-3.2zM757.2,596.4h3.2v3.4h-3.2zM184.5,399.0h1.0v1.3h-1.0zM361.0,461.7h1.0v1.0h-1.0zM478.1,503.3h1.5v1.7h-1.5zM504.4,512.0h1.4v2.2h-1.4zM510.5,514.4h1.6v2.1h-1.6zM517.6,517.1h1.5v1.9h-1.5zM524.4,519.7h1.7v1.9h-1.7zM531.8,522.5h1.8v1.9h-1.8zM539.0,524.7h1.6v2.0h-1.6zM545.2,527.1h2.2v2.5h-2.2zM553.0,529.9h1.8v2.2h-1.8zM559.7,531.9h2.1v2.3h-2.1zM567.0,535.0h2.3v2.7h-2.3zM575.3,537.9h2.1v2.3h-2.1zM582.3,540.1h2.1v2.8h-2.1zM589.8,543.2h2.1v2.5h-2.1zM598.1,545.8h2.1v2.5h-2.1zM605.3,548.3h2.6v2.8h-2.6zM613.3,551.1h2.3v2.5h-2.3zM621.3,554.2h2.6v2.6h-2.6zM629.8,557.1h2.2v2.6h-2.2zM637.8,559.8h2.7v2.8h-2.7zM645.9,562.7h2.9v2.9h-2.9zM654.4,565.7h3.0v3.2h-3.0zM663.1,568.2h3.0v3.4h-3.0zM671.9,571.5h2.8v3.0h-2.8zM680.5,574.9h2.8v3.2h-2.8zM707.1,584.6h2.9v3.4h-2.9zM716.2,587.6h3.0v3.2h-3.0zM725.2,590.5h2.8v3.4h-2.8zM735.0,594.0h2.9v3.4h-2.9zM362.0,466.6h1.0v1.3h-1.0zM448.1,497.3h1.3v1.4h-1.3zM466.7,504.2h1.5v1.7h-1.5zM492.7,513.4h1.7v1.9h-1.7zM500.2,515.9h1.6v2.0h-1.6zM506.5,518.2h1.6v2.0h-1.6zM512.9,520.4h1.7v2.4h-1.7zM520.5,522.6h2.1v2.1h-2.1zM526.9,525.1h1.8v1.9h-1.8zM556.1,535.3h1.9v2.4h-1.9zM563.7,538.5h2.1v2.4h-2.1zM570.8,541.2h2.0v2.3h-2.0zM578.0,543.8h2.6v2.8h-2.6zM586.2,545.9h2.3v2.9h-2.3zM594.1,549.4h2.2v2.8h-2.2zM601.6,551.6h2.1v3.0h-2.1zM610.1,554.8h2.2v3.0h-2.2zM617.9,557.9h2.2v2.9h-2.2zM626.1,560.3h2.4v2.8h-2.4zM634.2,563.3h2.5v3.2h-2.5zM642.4,566.9h2.7v2.9h-2.7zM651.3,569.6h2.7v3.2h-2.7zM659.3,572.8h2.9v3.1h-2.9zM668.1,575.9h2.9v3.1h-2.9zM676.5,578.8h3.0v3.2h-3.0zM685.7,581.7h2.8v3.4h-2.8zM694.9,584.9h3.2v3.4h-3.2zM703.9,588.6h3.1v3.2h-3.1zM712.6,591.6h3.0v3.4h-3.0zM384.8,478.9h1.2v1.3h-1.2zM390.4,480.7h1.4v1.3h-1.4zM396.2,482.9h1.3v1.1h-1.3zM437.0,497.4h1.4v1.7h-1.4zM455.8,504.8h1.4v1.7h-1.4zM462.8,507.1h1.4v1.7h-1.4zM468.7,509.2h1.8v1.9h-1.8zM475.0,511.2h1.5v2.0h-1.5zM482.0,513.8h1.8v2.0h-1.8zM488.3,515.9h1.8v1.7h-1.8zM502.3,521.0h2.0v1.9h-2.0zM509.0,523.3h2.0v2.2h-2.0zM516.1,525.8h2.0v2.4h-2.0zM523.2,528.9h1.9v2.0h-1.9zM529.5,530.9h2.1v2.6h-2.1zM536.9,533.5h2.1v2.4h-2.1zM558.9,541.6h2.5v2.8h-2.5zM566.8,545.0h2.2v2.4h-2.2zM574.7,546.8h2.3v2.5h-2.3zM582.3,550.2h2.6v2.5h-2.6zM589.9,553.0h2.4v2.8h-2.4zM598.0,555.9h2.4v2.5h-2.4zM606.2,558.5h2.3v2.6h-2.3zM613.7,561.1h2.9v2.8h-2.9zM622.1,564.8h2.8v2.8h-2.8zM630.3,567.2h2.9v3.3h-2.9zM638.6,570.0h2.9v3.2h-2.9zM346.7,469.2h1.0v1.0h-1.0zM420.3,495.7h1.5v1.7h-1.5zM426.6,498.0h1.5v1.6h-1.5zM444.8,504.9h1.5v1.7h-1.5zM451.7,507.8h1.7v1.8h-1.7zM457.2,509.3h1.9v2.1h-1.9zM470.6,514.4h1.8v2.1h-1.8zM476.9,517.3h1.8v1.9h-1.8zM483.9,519.2h2.1v2.0h-2.1zM490.9,521.6h1.7v2.2h-1.7zM497.8,524.0h1.9v2.2h-1.9zM504.2,526.8h1.9v2.4h-1.9zM511.5,528.9h1.8v2.4h-1.8zM518.4,531.8h2.3v2.3h-2.3zM525.8,534.2h1.8v2.6h-1.8zM533.2,536.9h2.0v2.7h-2.0zM539.7,540.1h2.2v2.3h-2.2zM547.0,542.3h2.3v2.3h-2.3zM555.1,545.1h2.4v2.9h-2.4zM562.7,547.5h2.6v2.7h-2.6zM570.1,550.4h2.4v2.6h-2.4zM577.7,553.6h2.3v2.9h-2.3zM585.4,556.4h2.6v3.1h-2.6zM593.7,559.3h2.8v3.1h-2.8zM353.1,475.9h1.0v1.0h-1.0zM358.0,477.7h1.0v1.2h-1.0zM403.9,494.7h1.4v1.5h-1.4zM422.1,500.8h1.3v1.7h-1.3zM428.2,503.6h1.4v1.7h-1.4zM440.3,508.0h1.5v1.9h-1.5zM446.9,510.2h1.8v1.7h-1.8zM452.8,513.0h1.9v2.2h-1.9zM459.0,515.5h2.0v1.8h-2.0zM465.7,517.6h2.0v1.8h-2.0zM472.9,520.0h1.8v2.0h-1.8zM479.7,522.9h2.1v2.0h-2.1zM486.0,524.8h2.0v2.0h-2.0zM493.2,527.6h2.1v2.2h-2.1zM500.1,530.0h1.8v2.5h-1.8zM507.1,532.7h2.2v2.3h-2.2zM513.6,535.3h2.0v2.6h-2.0zM521.1,537.9h2.3v2.4h-2.3zM528.3,540.6h2.0v2.5h-2.0zM536.2,543.2h2.1v2.4h-2.1zM543.1,545.6h2.5v2.5h-2.5zM550.6,548.8h2.5v2.5h-2.5zM558.4,551.0h2.3v3.0h-2.3zM566.0,554.7h2.7v2.7h-2.7zM573.6,557.4h2.3v3.1h-2.3zM581.8,560.4h2.6v3.2h-2.6zM589.6,562.9h2.7v3.1h-2.7zM127.4,395.4h1.1v1.3h-1.1zM393.1,495.3h1.5v1.7h-1.5zM398.9,497.4h1.4v1.5h-1.4zM422.8,506.1h1.5v1.7h-1.5zM429.0,509.2h1.9v1.6h-1.9zM435.2,510.5h2.0v2.2h-2.0zM441.7,513.6h1.7v1.7h-1.7zM448.3,515.6h1.6v1.8h-1.6zM455.3,517.7h1.6v2.2h-1.6zM461.1,520.9h2.1v2.2h-2.1zM467.9,523.4h1.6v2.4h-1.6zM475.0,525.5h1.7v2.0h-1.7zM481.5,528.0h2.1v2.1h-2.1zM488.5,530.3h2.1v2.4h-2.1zM495.4,533.3h2.3v2.4h-2.3zM502.4,535.8h2.2v2.3h-2.2zM509.7,538.2h2.2v2.7h-2.2zM516.6,541.3h2.3v2.6h-2.3zM524.1,544.1h2.5v2.6h-2.5zM531.2,546.8h2.2v2.5h-2.2zM538.5,549.6h2.7v2.9h-2.7zM546.8,552.1h2.2v2.8h-2.2zM553.5,555.5h2.7v2.7h-2.7zM561.8,558.4h2.5v2.9h-2.5zM569.2,560.6h2.8v2.8h-2.8zM577.3,563.6h2.6v2.8h-2.6zM230.7,438.8h1.0v1.2h-1.0zM376.2,493.6h1.4v1.5h-1.4zM382.5,495.7h1.3v1.7h-1.3zM394.1,500.1h1.5v1.7h-1.5zM400.0,502.4h1.5v1.7h-1.5zM406.2,504.9h1.6v1.7h-1.6zM411.7,507.4h1.7v2.0h-1.7zM417.8,509.7h1.7v1.7h-1.7zM424.4,512.0h1.8v1.8h-1.8zM430.9,513.8h2.0v1.7h-2.0zM437.0,516.8h1.8v1.8h-1.8zM443.9,518.6h1.6v2.1h-1.6zM449.7,521.1h2.1v2.0h-2.1zM457.1,523.9h1.9v2.3h-1.9zM476.6,531.2h1.8v2.3h-1.8zM483.9,534.2h1.9v2.3h-1.9zM490.8,536.3h1.9v2.6h-1.9zM497.4,538.9h2.1v2.8h-2.1zM505.1,541.5h2.3v2.8h-2.3zM512.3,544.7h2.2v2.9h-2.2zM519.3,547.5h2.3v2.7h-2.3zM526.7,550.1h2.4v3.0h-2.4zM534.1,553.2h2.6v2.9h-2.6zM541.5,555.8h2.6v2.6h-2.6zM549.7,558.6h2.7v2.6h-2.7zM557.4,562.1h2.9v3.0h-2.9zM565.2,565.0h2.9v2.7h-2.9zM573.1,567.9h2.5v2.8h-2.5zM348.8,487.7h1.5v1.6h-1.5zM371.4,496.8h1.1v1.6h-1.1zM383.2,501.0h1.5v1.5h-1.5zM388.5,503.2h1.8v1.5h-1.8zM400.9,508.0h1.5v2.0h-1.5zM407.5,509.7h1.5v1.8h-1.5zM413.4,511.8h1.9v2.2h-1.9zM419.4,515.1h1.6v1.8h-1.6zM425.6,517.6h1.6v1.9h-1.6zM432.7,519.2h1.8v2.4h-1.8zM438.9,522.1h1.7v2.2h-1.7zM445.4,525.0h2.0v2.1h-2.0zM472.3,535.1h2.1v2.6h-2.1zM479.3,537.1h2.2v2.7h-2.2zM486.3,540.6h2.5v2.3h-2.5zM493.2,542.8h2.5v2.6h-2.5zM500.3,545.1h2.1v2.8h-2.1zM507.9,548.5h2.2v2.5h-2.2zM514.7,551.0h2.6v2.7h-2.6zM522.0,554.0h2.6v3.0h-2.6zM530.1,556.5h2.2v3.0h-2.2zM560.9,568.6h2.9v2.9h-2.9zM568.7,571.4h2.7v3.2h-2.7zM101.8,396.3h1.0v1.4h-1.0zM338.0,488.6h1.3v1.6h-1.3zM371.8,501.5h1.4v1.9h-1.4zM377.8,503.8h1.8v1.7h-1.8zM384.0,505.6h1.4v1.9h-1.4zM389.5,508.5h1.9v1.7h-1.9zM395.5,510.3h1.9v2.2h-1.9zM402.2,513.5h1.7v1.8h-1.7zM408.2,515.2h1.5v1.8h-1.5zM415.0,518.2h1.7v2.2h-1.7zM420.9,520.8h1.9v1.9h-1.9zM427.8,523.0h1.7v2.0h-1.7zM433.5,525.4h1.7v2.3h-1.7zM440.6,528.4h1.9v2.0h-1.9zM466.9,538.7h2.5v2.4h-2.5zM474.4,541.3h2.2v2.4h-2.2zM481.1,543.9h2.5v2.5h-2.5zM510.0,554.4h2.7v3.1h-2.7zM517.1,558.0h2.5v2.8h-2.5zM524.9,560.8h2.8v2.6h-2.8zM556.0,572.4h3.0v3.3h-3.0zM564.2,575.7h2.9v3.2h-2.9zM99.1,400.0h1.0v1.3h-1.0zM321.8,486.9h1.5v1.6h-1.5zM327.1,488.9h1.4v1.7h-1.4zM354.8,499.8h1.6v1.5h-1.6zM361.0,501.9h1.3v1.8h-1.3zM367.1,504.2h1.5v1.9h-1.5zM372.7,506.8h1.8v1.9h-1.8zM379.0,509.3h1.9v1.6h-1.9zM384.7,510.8h1.9v2.2h-1.9zM391.1,513.4h1.7v2.0h-1.7zM396.6,515.8h1.7v1.9h-1.7zM402.9,518.2h1.8v2.3h-1.8zM409.6,520.7h2.0v2.0h-2.0zM415.5,523.0h2.0v2.3h-2.0zM422.6,525.5h1.7v2.5h-1.7zM428.8,529.0h1.7v2.0h-1.7zM435.3,531.0h2.2v2.4h-2.2zM442.3,533.5h2.1v2.3h-2.1zM513.0,561.6h2.6v2.8h-2.6zM520.6,564.5h2.6v2.8h-2.6zM551.8,576.2h3.1v3.4h-3.1zM349.8,502.8h1.3v1.7h-1.3zM355.6,504.5h1.7v2.0h-1.7zM362.0,507.3h1.4v1.9h-1.4zM368.0,510.0h1.5v2.0h-1.5zM373.8,511.9h1.7v1.9h-1.7zM379.4,514.9h1.5v1.8h-1.5zM385.9,516.6h1.7v2.3h-1.7zM392.3,519.2h1.8v2.0h-1.8zM404.1,524.3h1.7v2.4h-1.7zM410.7,527.0h1.8v2.4h-1.8zM416.9,529.3h2.3v2.6h-2.3zM423.8,532.2h2.2v2.1h-2.2zM430.5,534.2h1.9v2.1h-1.9zM437.2,536.8h2.1v2.8h-2.1zM444.1,540.0h2.2v2.6h-2.2zM450.8,542.4h2.0v2.7h-2.0zM457.6,544.7h2.5v2.7h-2.5zM546.9,580.8h3.2v3.4h-3.2zM338.6,503.0h1.4v1.7h-1.4zM344.5,505.4h1.7v1.6h-1.7zM350.5,508.2h1.6v2.0h-1.6zM368.0,515.4h1.5v2.1h-1.5zM374.3,517.4h1.5v2.4h-1.5zM380.4,520.2h1.6v2.0h-1.6zM386.5,522.8h2.0v2.0h-2.0zM393.3,524.4h1.8v2.3h-1.8zM399.5,527.0h2.0v2.3h-2.0zM405.8,529.8h1.9v2.5h-1.9zM412.0,532.7h2.2v2.5h-2.2zM418.9,534.9h2.0v2.5h-2.0zM425.3,538.0h2.1v2.7h-2.1zM431.7,540.5h2.4v2.4h-2.4zM438.4,543.0h2.2v2.8h-2.2zM445.2,546.0h2.1v2.5h-2.1zM452.5,548.7h2.3v2.9h-2.3zM459.1,551.9h2.3v2.5h-2.3zM503.0,569.2h3.0v3.4h-3.0zM510.9,572.3h2.7v3.1h-2.7zM534.2,581.2h3.0v3.3h-3.0zM542.7,584.1h3.0v3.4h-3.0zM83.6,404.6h1.0v1.3h-1.0zM328.0,504.1h1.7v1.6h-1.7zM333.9,506.4h1.3v1.7h-1.3zM339.6,508.2h1.8v1.9h-1.8zM345.4,510.8h1.7v1.7h-1.7zM393.7,530.3h1.8v2.6h-1.8zM400.7,532.9h2.0v2.4h-2.0zM406.6,535.9h2.2v2.3h-2.2zM412.9,538.4h2.4v2.5h-2.4zM420.1,540.8h2.2v2.5h-2.2zM426.5,544.3h2.4v2.4h-2.4zM433.5,546.6h2.4v2.6h-2.4zM440.6,549.2h2.6v2.8h-2.6zM447.2,552.2h2.4v3.0h-2.4zM454.7,555.0h2.5v2.7h-2.5zM461.4,558.3h2.6v2.8h-2.6zM498.3,572.6h3.0v3.3h-3.0zM506.4,576.2h2.9v3.2h-2.9zM513.5,579.4h3.1v3.4h-3.1zM521.5,581.8h3.1v3.4h-3.1zM529.4,585.7h3.2v3.4h-3.2zM537.7,588.6h3.0v3.3h-3.0zM74.9,405.0h1.0v1.0h-1.0zM120.5,424.5h1.1v1.0h-1.1zM128.0,427.2h1.0v1.3h-1.0zM322.6,506.8h1.4v1.6h-1.4zM328.4,509.4h1.5v2.0h-1.5zM333.6,511.8h1.4v2.0h-1.4zM339.7,514.2h2.0v2.2h-2.0zM382.1,530.9h2.0v2.6h-2.0zM388.9,533.8h2.3v2.6h-2.3zM394.9,536.9h2.1v2.4h-2.1zM401.1,539.6h2.5v2.3h-2.5zM407.9,542.0h2.4v2.4h-2.4zM415.0,544.2h2.5v2.9h-2.5zM421.5,547.7h2.3v2.8h-2.3zM434.8,552.9h2.3v2.7h-2.3zM442.2,556.3h2.4v2.7h-2.4zM449.0,559.0h2.3v2.9h-2.3zM456.1,561.5h2.6v3.2h-2.6zM485.7,573.9h2.7v3.3h-2.7zM493.4,576.6h3.0v3.3h-3.0zM516.8,586.3h2.7v3.4h-2.7zM525.0,589.3h2.8v3.2h-2.8zM533.1,592.9h3.0v3.4h-3.0zM310.8,507.4h1.9v1.8h-1.9zM317.1,509.6h1.5v1.7h-1.5zM322.3,512.2h1.7v2.1h-1.7zM328.3,514.4h1.5v2.2h-1.5zM376.2,534.5h2.4v2.2h-2.4zM383.3,537.1h2.2v2.4h-2.2zM389.8,539.8h2.2v2.3h-2.2zM395.9,542.4h2.4v2.5h-2.4zM402.7,545.3h2.4v2.6h-2.4zM409.4,547.8h2.2v2.8h-2.2zM415.9,551.1h2.2v2.6h-2.2zM423.2,554.0h2.2v3.1h-2.2zM429.6,557.1h2.5v2.6h-2.5zM437.1,559.1h2.8v3.1h-2.8zM443.5,562.1h2.8v2.9h-2.8zM450.8,565.6h2.7v2.9h-2.7zM458.1,568.0h2.9v3.3h-2.9zM465.9,571.6h2.7v2.9h-2.7zM473.5,574.3h2.7v3.4h-2.7zM480.7,577.5h2.7v3.3h-2.7zM519.9,594.0h2.8v3.4h-2.8zM105.6,426.3h1.0v1.1h-1.0zM109.3,428.2h1.1v1.0h-1.1zM283.9,501.2h1.3v1.7h-1.3zM288.7,503.6h1.3v2.0h-1.3zM300.2,508.7h1.9v1.8h-1.9zM305.2,510.4h1.8v2.2h-1.8zM311.1,512.8h1.8v2.2h-1.8zM316.7,515.6h1.6v2.2h-1.6zM322.2,517.5h1.9v1.9h-1.9zM370.9,537.7h2.4v2.6h-2.4zM377.7,540.7h2.1v2.4h-2.1zM383.5,543.1h2.5v2.5h-2.5zM390.3,546.1h2.0v2.7h-2.0zM397.5,549.5h2.4v2.5h-2.4zM403.6,551.6h2.7v3.0h-2.7zM410.3,554.6h2.7v2.6h-2.7zM416.9,557.4h2.8v2.8h-2.8zM424.6,560.6h2.3v3.0h-2.3zM431.8,563.2h2.7v3.3h-2.7zM438.7,566.3h2.8v3.2h-2.8zM445.4,568.9h2.9v3.0h-2.9zM452.9,572.3h2.6v3.1h-2.6zM460.3,575.3h3.1v3.3h-3.1zM467.7,578.4h3.1v3.3h-3.1zM475.3,581.4h2.8v3.1h-2.8zM74.3,418.3h1.2v1.0h-1.2zM272.3,501.8h1.8v1.9h-1.8zM277.8,504.1h1.5v1.7h-1.5zM283.3,506.9h1.7v1.6h-1.7zM288.7,509.2h1.5v1.6h-1.5zM293.8,510.8h1.7v2.0h-1.7zM310.9,518.7h1.8v1.9h-1.8zM316.8,521.2h1.8v1.9h-1.8zM359.0,538.9h2.3v2.2h-2.3zM365.8,541.2h2.0v2.8h-2.0zM372.2,544.4h2.3v2.9h-2.3zM378.3,547.2h2.4v2.4h-2.4zM385.4,550.0h2.2v2.5h-2.2zM391.3,552.5h2.4v3.0h-2.4zM398.6,555.2h2.7v3.0h-2.7zM405.6,558.7h2.4v2.8h-2.4zM419.3,564.0h2.6v3.1h-2.6zM425.8,567.3h2.9v3.0h-2.9zM432.8,570.6h2.6v3.0h-2.6zM447.8,576.1h2.9v3.4h-2.9zM455.0,579.3h2.7v3.2h-2.7zM462.9,582.9h2.8v3.2h-2.8zM470.0,586.2h3.2v3.3h-3.2zM477.9,588.6h2.9v3.4h-2.9zM230.3,489.1h1.4v1.4h-1.4zM266.7,504.9h1.7v2.0h-1.7zM272.3,507.2h1.7v1.9h-1.7zM277.1,509.7h1.9v2.0h-1.9zM282.9,512.1h1.5v2.2h-1.5zM354.1,542.2h2.2v2.5h-2.2zM359.7,544.8h2.6v2.8h-2.6zM366.6,547.4h2.1v2.7h-2.1zM372.8,550.6h2.2v2.8h-2.2zM385.8,556.4h2.4v2.6h-2.4zM393.2,558.8h2.3v3.2h-2.3zM399.4,562.2h2.7v2.9h-2.7zM406.1,564.9h2.6v3.1h-2.6zM413.7,568.0h2.5v3.1h-2.5zM420.9,570.7h2.9v3.1h-2.9zM427.5,573.9h2.9v3.3h-2.9zM435.2,576.9h2.7v3.4h-2.7zM442.4,580.4h2.9v3.1h-2.9zM456.7,587.0h3.2v3.3h-3.2zM464.9,589.7h3.2v3.3h-3.2zM472.3,593.8h3.2v3.4h-3.2zM480.3,596.7h2.9v3.4h-2.9zM219.9,489.8h1.0v1.4h-1.0zM224.1,492.0h1.6v1.3h-1.6zM229.8,494.2h1.3v1.6h-1.3zM234.3,496.7h1.3v1.7h-1.3zM239.7,498.6h1.7v1.5h-1.7zM255.7,505.4h1.8v2.0h-1.8zM260.7,508.4h1.5v1.7h-1.5zM266.0,510.1h1.8v1.8h-1.8zM288.6,519.6h1.6v1.9h-1.6zM294.1,522.2h2.0v1.9h-2.0zM335.4,539.9h2.4v2.7h-2.4zM341.7,542.8h2.3v2.3h-2.3zM348.3,546.0h2.2v2.4h-2.2zM354.4,548.1h2.4v2.7h-2.4zM360.6,551.7h2.3v2.8h-2.3zM380.1,560.1h2.7v2.9h-2.7zM387.3,562.5h2.8v2.8h-2.8zM393.5,566.3h2.9v2.8h-2.9zM400.9,568.5h2.6v3.3h-2.6zM408.1,572.1h2.7v3.0h-2.7zM414.8,574.6h2.8v3.4h-2.8zM429.4,581.7h2.7v3.2h-2.7zM443.8,587.4h3.1v3.2h-3.1zM451.4,591.3h3.2v3.4h-3.2zM459.2,594.7h2.8v3.4h-2.8zM467.0,597.4h3.2v3.4h-3.2zM85.4,436.2h1.1v1.0h-1.1zM198.7,486.5h1.4v1.5h-1.4zM218.3,495.4h1.2v1.5h-1.2zM223.5,497.2h1.5v1.8h-1.5zM228.1,499.6h1.7v1.8h-1.7zM233.7,501.9h1.5v1.5h-1.5zM238.9,504.4h1.5v1.5h-1.5zM255.0,511.0h1.8v2.2h-1.8zM281.9,522.6h2.1v2.3h-2.1zM329.7,544.0h2.0v2.8h-2.0zM335.8,546.5h2.4v2.9h-2.4zM374.8,563.2h2.6v3.2h-2.6zM381.1,566.9h2.5v3.2h-2.5zM387.9,570.0h2.6v3.1h-2.6zM394.6,572.5h2.8v3.1h-2.8zM409.5,579.2h2.9v3.4h-2.9zM431.4,588.3h3.2v3.4h-3.2zM438.7,591.7h3.2v3.4h-3.2zM445.8,595.6h3.1v3.4h-3.1zM453.9,599.0h3.2v3.3h-3.2zM183.9,484.8h1.0v1.2h-1.0zM193.1,489.2h1.5v1.6h-1.5zM197.7,490.9h1.5v1.8h-1.5zM222.8,502.7h1.5v1.5h-1.5zM316.9,544.3h2.5v2.3h-2.5zM323.5,547.5h2.1v2.8h-2.1zM361.9,564.3h2.9v2.9h-2.9zM368.9,567.8h2.6v3.0h-2.6zM375.7,570.7h2.6v3.0h-2.6zM382.2,573.2h3.0v3.1h-3.0zM389.4,576.5h2.9v3.1h-2.9zM396.3,579.8h3.1v3.2h-3.1zM403.8,583.1h2.8v3.4h-2.8zM425.3,592.5h3.2v3.4h-3.2zM48.2,428.8h1.0v1.0h-1.0zM62.6,435.3h1.0v1.3h-1.0zM172.9,485.5h1.2v1.6h-1.2zM177.0,487.4h1.5v1.3h-1.5zM182.3,489.9h1.1v1.8h-1.1zM187.2,491.9h1.4v1.4h-1.4zM192.0,493.9h1.5v1.8h-1.5zM196.1,496.2h1.6v1.6h-1.6zM298.7,542.6h2.5v2.3h-2.5zM305.4,545.0h2.4v2.9h-2.4zM310.9,548.5h2.1v2.6h-2.1zM349.1,565.4h2.5v2.9h-2.5zM355.7,567.9h2.8v3.2h-2.8zM362.5,571.1h2.7v3.1h-2.7zM369.5,574.5h3.0v3.3h-3.0zM376.4,577.4h2.7v3.4h-2.7zM383.2,580.9h2.9v3.4h-2.9zM390.0,583.7h3.1v3.3h-3.1zM397.8,586.8h3.1v3.4h-3.1zM404.7,590.2h3.0v3.4h-3.0zM412.1,594.0h3.1v3.4h-3.1zM435.1,604.4h2.9v3.3h-2.9zM442.9,607.3h3.0v3.4h-3.0zM35.3,428.0h1.0v1.1h-1.0zM56.9,437.5h1.0v1.1h-1.0zM135.2,473.5h1.0v1.1h-1.0zM139.9,475.9h1.3v1.2h-1.3zM171.3,490.8h1.2v1.3h-1.2zM175.4,492.2h1.7v1.6h-1.7zM180.2,494.4h1.6v1.4h-1.6zM185.2,497.0h1.3v1.6h-1.3zM286.6,543.5h2.1v2.5h-2.1zM292.8,546.2h2.3v2.8h-2.3zM298.5,549.1h2.3v2.5h-2.3zM304.7,552.1h2.3v2.5h-2.3zM310.8,554.1h2.7v3.0h-2.7zM317.9,557.3h2.4v2.9h-2.4zM342.7,568.8h2.9v3.0h-2.9zM350.2,571.9h2.8v3.4h-2.8zM363.9,578.9h2.7v3.2h-2.7zM370.5,581.9h3.0v3.4h-3.0zM377.7,584.9h2.9v3.4h-2.9zM384.8,588.1h2.9v3.4h-2.9zM391.6,591.5h3.2v3.4h-3.2zM421.3,605.1h3.2v3.4h-3.2zM428.8,608.9h2.9v3.4h-2.9zM32.9,431.4h1.0v1.1h-1.0zM169.5,494.7h1.5v1.9h-1.5zM268.8,541.9h2.1v2.3h-2.1zM275.1,544.2h2.2v2.9h-2.2zM280.0,546.6h2.5v2.4h-2.5zM286.6,549.8h2.2v2.9h-2.2zM292.2,552.4h2.4v2.7h-2.4zM298.2,555.1h2.8v3.1h-2.8zM304.7,557.9h2.3v2.6h-2.3zM310.7,561.1h2.7v3.3h-2.7zM343.9,575.9h2.6v3.1h-2.6zM350.5,579.4h2.7v3.1h-2.7zM357.0,582.5h2.7v3.3h-2.7zM364.3,585.8h2.9v3.4h-2.9zM371.7,588.6h2.9v3.4h-2.9zM378.4,592.7h2.9v3.3h-2.9zM385.3,595.7h2.9v3.4h-2.9zM407.8,606.5h2.9v3.3h-2.9zM415.6,610.0h3.1v3.4h-3.1zM245.3,537.1h2.2v2.3h-2.2zM251.3,539.6h2.2v2.6h-2.2zM256.9,542.5h2.4v2.4h-2.4zM262.6,544.9h2.6v2.4h-2.6zM268.1,547.3h2.5v2.5h-2.5zM274.0,550.2h2.7v2.6h-2.7zM279.9,553.1h2.5v3.0h-2.5zM286.2,556.1h2.6v3.0h-2.6zM291.9,559.3h2.8v2.6h-2.8zM304.8,564.8h2.5v3.3h-2.5zM311.5,567.5h2.8v3.3h-2.8zM317.3,570.9h2.7v3.3h-2.7zM323.8,574.3h3.1v3.3h-3.1zM330.2,576.9h3.0v3.4h-3.0zM337.3,580.3h3.2v3.1h-3.2zM344.1,583.1h3.2v3.4h-3.2zM350.7,586.7h2.9v3.2h-2.9zM357.6,590.0h3.2v3.2h-3.2zM364.7,593.2h2.9v3.3h-2.9zM371.9,596.9h3.2v3.3h-3.2zM379.8,599.9h2.8v3.4h-2.8zM386.9,603.9h3.0v3.3h-3.0zM394.5,606.7h3.0v3.4h-3.0zM30.7,441.1h1.0v1.0h-1.0zM232.9,537.8h2.3v2.5h-2.3zM238.9,540.5h2.1v2.3h-2.1zM244.6,542.7h2.1v2.4h-2.1zM249.8,545.7h2.6v2.7h-2.6zM256.0,548.7h2.3v2.8h-2.3zM262.0,551.3h2.5v2.8h-2.5zM267.8,553.9h2.4v2.6h-2.4zM273.6,556.5h2.4v3.1h-2.4zM279.9,559.3h2.5v3.2h-2.5zM286.0,562.5h2.4v3.0h-2.4zM292.2,565.4h2.7v3.2h-2.7zM298.0,569.2h2.5v3.0h-2.5zM304.2,572.0h3.0v3.4h-3.0zM311.0,575.1h3.0v3.4h-3.0zM317.3,577.6h2.9v3.2h-2.9zM324.3,580.8h3.0v3.2h-3.0zM330.9,584.0h3.1v3.2h-3.1zM338.2,587.9h2.9v3.4h-2.9zM345.0,591.1h3.1v3.2h-3.1zM351.6,594.7h2.8v3.2h-2.8zM358.3,597.6h2.9v3.4h-2.9zM366.1,601.5h2.8v3.4h-2.8zM373.0,604.9h3.1v3.2h-3.1zM380.2,607.6h3.1v3.4h-3.1zM215.6,536.1h2.2v2.2h-2.2zM221.2,538.3h2.3v2.5h-2.3zM226.8,541.0h2.2v2.6h-2.2zM232.3,543.7h2.2v2.5h-2.2zM237.9,546.8h2.3v2.5h-2.3zM243.6,549.3h2.5v2.7h-2.5zM249.4,552.2h2.1v2.7h-2.1zM255.0,555.0h2.6v2.9h-2.6zM260.9,557.9h2.8v2.9h-2.8zM266.5,560.8h2.9v2.7h-2.9zM273.2,563.2h2.5v3.3h-2.5zM279.0,567.0h2.5v2.9h-2.5zM285.9,570.0h2.7v2.9h-2.7zM292.1,572.5h3.0v3.2h-3.0zM298.1,576.0h2.6v3.3h-2.6zM304.8,579.0h3.2v3.2h-3.2zM310.9,581.7h3.0v3.3h-3.0zM318.1,584.8h2.9v3.3h-2.9zM324.6,588.3h3.0v3.3h-3.0zM331.2,591.4h2.8v3.4h-2.8zM338.1,595.6h2.9v3.2h-2.9zM344.8,598.2h3.0v3.4h-3.0zM352.0,602.3h2.9v3.3h-2.9zM366.4,608.9h3.2v3.4h-3.2zM32.0,451.8h1.2v1.1h-1.2zM46.3,459.5h1.1v1.0h-1.1zM62.2,466.5h1.0v1.1h-1.0zM69.5,470.9h1.0v1.0h-1.0zM73.9,472.6h1.2v1.4h-1.2zM81.8,476.6h1.0v1.2h-1.0zM102.9,487.3h1.0v1.3h-1.0zM106.8,488.6h1.5v1.6h-1.5zM111.8,491.1h1.2v1.7h-1.2zM115.7,493.8h1.5v1.6h-1.5zM119.9,495.6h1.5v1.9h-1.5zM124.9,498.2h1.3v1.4h-1.3zM182.0,526.0h2.0v2.2h-2.0zM187.6,528.3h2.3v2.0h-2.3zM197.8,533.7h2.2v2.5h-2.2zM203.1,536.6h2.0v2.4h-2.0zM214.0,541.9h2.2v2.6h-2.2zM219.6,544.7h2.1v2.5h-2.1zM225.6,547.0h2.6v2.4h-2.6zM231.3,549.5h2.5v3.0h-2.5zM236.8,553.3h2.4v2.6h-2.4zM242.9,555.6h2.6v2.9h-2.6zM248.5,558.4h2.8v2.7h-2.8zM254.1,561.7h2.4v3.2h-2.4zM260.4,564.5h2.9v2.8h-2.9zM266.7,567.5h3.0v2.9h-3.0zM272.9,570.2h2.6v3.4h-2.6zM279.1,573.8h3.1v3.3h-3.1zM285.3,576.8h3.0v3.1h-3.0zM291.4,580.0h2.7v3.1h-2.7zM298.3,582.6h3.1v3.3h-3.1zM304.7,586.4h3.0v3.3h-3.0zM311.0,589.4h2.9v3.4h-2.9zM318.3,593.0h2.8v3.4h-2.8zM325.1,596.2h2.9v3.4h-2.9zM331.6,599.4h3.0v3.3h-3.0zM338.8,603.1h3.2v3.4h-3.2zM345.9,606.8h3.0v3.4h-3.0zM352.8,609.9h3.2v3.2h-3.2zM51.9,467.7h1.0v1.3h-1.0zM74.8,479.3h1.4v1.2h-1.4zM79.3,480.8h1.3v1.6h-1.3zM83.8,483.5h1.0v1.4h-1.0zM88.0,485.3h1.0v1.7h-1.0zM91.6,487.5h1.4v1.4h-1.4zM96.1,489.5h1.1v1.6h-1.1zM100.1,491.9h1.3v1.3h-1.3zM104.5,494.1h1.5v1.7h-1.5zM109.2,496.6h1.3v1.4h-1.3zM113.5,498.0h1.7v1.9h-1.7zM117.8,500.7h1.7v1.6h-1.7zM122.9,503.2h1.3v1.6h-1.3zM126.8,505.2h1.4v2.1h-1.4zM160.3,521.9h2.2v2.0h-2.2zM165.8,524.4h2.0v1.9h-2.0zM170.4,527.1h2.0v2.1h-2.0zM176.1,529.5h1.8v2.2h-1.8zM180.3,532.1h2.1v2.2h-2.1zM186.5,534.1h1.9v2.5h-1.9zM190.9,536.8h2.0v2.2h-2.0zM196.2,539.5h2.5v2.2h-2.5zM202.3,542.2h2.2v2.4h-2.2zM207.2,544.9h2.1v2.7h-2.1zM241.9,562.3h2.4v3.1h-2.4zM247.5,565.4h2.9v2.8h-2.9zM253.4,568.4h2.9v3.0h-2.9zM259.7,570.8h2.5v3.4h-2.5zM265.6,574.3h2.6v3.4h-2.6zM271.8,577.5h3.1v3.4h-3.1zM278.3,580.7h2.8v3.2h-2.8zM284.9,583.5h3.1v3.3h-3.1zM291.4,587.0h2.7v3.4h-2.7zM298.0,590.3h2.9v3.3h-2.9zM304.6,593.3h3.2v3.4h-3.2zM311.1,597.0h2.8v3.3h-2.8zM317.8,600.1h3.2v3.3h-3.2zM325.3,604.1h3.2v3.4h-3.2zM332.0,607.1h3.0v3.4h-3.0zM44.8,469.6h1.0v1.4h-1.0zM60.0,477.9h1.3v1.4h-1.3zM64.3,480.1h1.0v1.5h-1.0zM68.2,481.6h1.4v1.1h-1.4zM72.3,484.4h1.4v1.4h-1.4zM77.0,486.4h1.1v1.2h-1.1zM80.8,487.7h1.4v1.7h-1.4zM84.7,490.4h1.5v1.5h-1.5zM89.7,492.0h1.2v1.6h-1.2zM93.1,494.5h1.4v1.3h-1.4zM98.0,497.0h1.2v1.6h-1.2zM120.0,507.8h1.7v1.9h-1.7zM153.0,524.9h2.1v2.3h-2.1zM159.1,527.5h1.8v2.2h-1.8zM163.5,530.3h2.1v2.5h-2.1zM168.5,532.2h2.0v2.4h-2.0zM174.3,535.7h1.9v2.3h-1.9zM179.1,537.6h2.0v2.4h-2.0zM184.2,540.7h2.0v2.6h-2.0zM189.2,542.9h2.3v2.8h-2.3zM200.8,548.5h2.5v2.6h-2.5zM205.6,551.1h2.6v2.8h-2.6zM228.7,563.4h2.4v3.1h-2.4zM234.9,566.3h2.9v3.2h-2.9zM240.7,569.1h2.9v2.8h-2.9zM252.8,575.2h2.8v3.4h-2.8zM259.2,578.7h2.8v3.2h-2.8zM264.7,581.2h3.1v3.4h-3.1zM271.6,584.5h3.2v3.4h-3.2zM278.1,587.6h2.8v3.4h-2.8zM284.4,591.6h2.7v3.4h-2.7zM291.0,594.9h2.8v3.4h-2.8zM297.8,597.9h3.0v3.4h-3.0zM304.0,601.1h3.1v3.4h-3.1zM311.3,604.8h2.8v3.4h-2.8zM30.1,468.3h1.0v1.0h-1.0zM34.3,470.0h1.0v1.3h-1.0zM45.3,476.0h1.0v1.4h-1.0zM49.8,478.6h1.3v1.5h-1.3zM53.2,480.2h1.1v1.0h-1.1zM57.1,482.3h1.0v1.2h-1.0zM61.9,484.1h1.1v1.4h-1.1zM65.9,487.0h1.3v1.1h-1.3zM69.6,488.4h1.6v1.5h-1.6zM73.4,490.4h1.4v1.6h-1.4zM78.4,493.1h1.2v1.5h-1.2zM82.2,495.5h1.5v1.7h-1.5zM86.3,497.3h1.5v1.4h-1.5zM91.0,499.3h1.5v1.5h-1.5zM95.0,502.3h1.6v1.4h-1.6zM99.9,504.5h1.5v1.6h-1.5zM104.3,506.1h1.6v1.9h-1.6zM109.0,508.8h1.7v2.1h-1.7zM113.1,511.4h1.6v1.8h-1.6zM146.6,528.2h1.9v2.6h-1.9zM151.4,530.8h2.1v2.1h-2.1zM156.8,533.4h1.9v2.2h-1.9zM162.1,536.2h1.9v2.4h-1.9zM166.4,538.3h2.2v2.4h-2.2zM171.7,541.5h2.5v2.4h-2.5zM198.7,555.0h2.7v2.8h-2.7zM216.1,563.8h2.4v2.8h-2.4zM221.6,566.8h2.9v2.8h-2.9zM227.9,569.7h2.6v3.1h-2.6zM233.4,572.7h3.1v3.3h-3.1zM239.8,576.0h3.1v3.1h-3.1zM245.6,579.0h2.6v3.2h-2.6zM252.1,582.2h3.2v3.3h-3.2zM258.2,585.7h2.9v3.4h-2.9zM264.7,588.8h3.1v3.4h-3.1zM270.7,592.7h2.9v3.2h-2.9zM277.7,595.6h2.8v3.3h-2.8zM291.3,602.6h2.8v3.4h-2.8zM39.0,479.1h1.0v1.3h-1.0zM42.5,481.2h1.0v1.1h-1.0zM46.2,482.9h1.3v1.1h-1.3zM50.2,484.6h1.4v1.7h-1.4zM54.6,486.7h1.3v1.7h-1.3zM58.4,489.7h1.1v1.4h-1.1zM63.1,491.2h1.2v1.8h-1.2zM66.5,493.7h1.6v1.7h-1.6zM70.6,495.5h1.3v1.6h-1.3zM75.2,498.1h1.3v1.8h-1.3zM79.4,499.9h1.2v1.8h-1.2zM84.0,502.3h1.5v2.0h-1.5zM87.9,505.0h1.6v1.6h-1.6zM93.0,507.4h1.7v1.7h-1.7zM97.3,509.3h1.6v1.6h-1.6zM101.5,511.4h1.8v2.1h-1.8zM197.7,561.4h2.3v2.8h-2.3zM203.6,564.5h2.5v2.9h-2.5zM208.7,567.9h2.7v3.0h-2.7zM214.6,571.2h2.7v2.9h-2.7zM220.4,573.8h2.6v3.1h-2.6zM226.0,576.5h3.0v3.4h-3.0zM232.1,580.2h3.2v3.4h-3.2zM238.9,583.6h3.1v3.3h-3.1zM245.1,586.6h3.2v3.4h-3.2zM250.8,589.8h3.0v3.4h-3.0zM257.5,592.9h2.8v3.4h-2.8zM263.9,596.2h2.9v3.4h-2.9zM35.5,483.8h1.0v1.3h-1.0zM39.2,485.5h1.4v1.7h-1.4zM43.9,487.4h1.2v1.7h-1.2zM47.4,490.3h1.1v1.5h-1.1zM51.6,491.9h1.6v1.7h-1.6zM56.0,494.7h1.2v1.5h-1.2zM59.8,496.5h1.4v1.6h-1.4zM64.0,498.8h1.7v1.6h-1.7zM72.1,502.6h1.6v1.9h-1.6zM76.9,505.1h1.7v2.0h-1.7zM81.0,507.9h1.7v2.1h-1.7zM85.7,509.9h1.5v1.9h-1.5zM90.1,512.3h2.0v1.7h-2.0zM94.2,514.6h1.8v1.8h-1.8zM98.8,516.8h1.7v2.1h-1.7zM103.5,519.3h1.7v2.4h-1.7zM184.2,562.9h2.7v3.1h-2.7zM190.4,565.6h2.7v2.9h-2.7zM195.5,569.0h2.7v3.1h-2.7zM201.5,571.8h2.7v3.4h-2.7zM207.3,574.4h2.6v3.3h-2.6zM219.4,580.8h2.9v3.4h-2.9zM225.5,584.3h3.1v3.3h-3.1zM231.3,587.8h3.2v3.4h-3.2zM39.7,492.9h1.6v1.4h-1.6zM44.7,495.1h1.2v1.8h-1.2zM48.0,497.1h1.5v1.8h-1.5zM52.1,499.6h1.4v1.6h-1.4zM56.3,501.5h1.2v1.7h-1.2zM60.7,503.6h1.8v1.7h-1.8zM65.0,506.3h1.3v1.7h-1.3zM69.0,508.4h1.9v1.8h-1.9zM73.9,510.4h1.5v1.9h-1.5zM78.1,513.2h1.7v1.9h-1.7zM83.0,515.8h1.5v1.8h-1.5zM87.5,517.8h1.7v2.0h-1.7zM91.5,520.6h1.6v1.8h-1.6zM96.2,523.1h2.1v2.4h-2.1zM100.6,525.1h2.2v2.0h-2.2zM105.2,527.9h2.0v2.0h-2.0zM110.4,530.6h2.0v2.3h-2.0zM129.7,541.1h2.0v2.4h-2.0zM135.0,543.7h2.0v2.6h-2.0zM139.8,546.1h2.5v2.5h-2.5zM145.1,548.6h2.5v2.9h-2.5zM150.7,551.6h2.2v2.5h-2.2zM166.0,561.1h2.9v2.7h-2.9zM172.2,563.2h2.5v3.3h-2.5zM176.7,566.3h2.9v3.0h-2.9zM182.6,569.3h3.0v3.1h-3.0zM189.1,571.9h2.5v3.4h-2.5zM194.5,576.0h2.8v3.0h-2.8zM199.6,578.7h3.2v3.2h-3.2zM66.6,513.9h2.0v2.0h-2.0zM70.5,516.2h2.0v1.8h-2.0zM74.9,518.3h1.6v2.2h-1.6zM79.9,521.2h2.0v2.1h-2.0zM84.6,523.3h1.9v2.1h-1.9zM89.2,526.2h1.8v2.1h-1.8zM93.9,528.2h2.0v2.5h-2.0zM98.1,531.3h1.8v2.6h-1.8zM103.1,533.6h2.2v2.6h-2.2zM108.1,535.9h2.0v2.7h-2.0zM112.2,539.3h2.3v2.4h-2.3zM122.7,544.6h2.2v2.6h-2.2zM127.8,546.6h2.1v2.9h-2.1zM132.4,550.1h2.5v3.0h-2.5zM137.9,552.3h2.3v3.0h-2.3zM142.7,555.3h2.5v3.0h-2.5zM153.2,561.3h2.5v3.1h-2.5zM158.5,564.1h2.6v3.0h-2.6zM164.7,567.6h2.6v3.1h-2.6zM170.2,570.6h2.6v2.9h-2.6zM174.9,573.0h3.1v3.2h-3.1zM63.3,519.2h1.7v2.0h-1.7zM68.2,522.3h1.7v1.9h-1.7zM76.3,526.3h2.1v2.1h-2.1zM81.0,529.2h2.2v2.3h-2.2zM86.4,531.8h1.9v2.3h-1.9zM95.6,536.9h1.9v2.7h-1.9zM100.0,539.5h2.3v2.3h-2.3zM114.9,547.9h2.4v2.8h-2.4zM120.3,551.0h2.2v2.8h-2.2zM124.6,553.4h2.3v2.9h-2.3zM129.6,556.4h2.8v2.6h-2.8zM134.8,559.3h2.8v2.7h-2.8zM140.8,562.1h2.3v2.9h-2.3zM145.9,565.1h2.4v3.2h-2.4zM151.0,568.5h2.9v3.0h-2.9zM156.6,570.9h3.0v3.1h-3.0zM138.3,568.9h2.9v2.8h-2.9z" fill="#f6f6f6"/>
<rect x="241.7" y="378.2" width="10.3" height="4.6" fill="#f4f4f4"/>
<rect x="247.2" y="395" width="9.7" height="4.9" fill="#f4f4f4"/>
<rect x="309.7" y="406.1" width="10.3" height="4.9" fill="#f4f4f4"/>
<rect x="265" y="420.9" width="10.1" height="4.2" fill="#f4f4f4"/>
<rect x="357.7" y="405.1" width="10.3" height="4.5" fill="#f4f4f4"/>
<rect x="355.9" y="420.9" width="10.1" height="4.6" fill="#f4f4f4"/>
<rect x="329.7" y="348.4" width="10.1" height="4.9" fill="#f4f4f4"/>
<rect x="274.8" y="350" width="7.7" height="2.9" fill="#f4f4f4"/>
<rect x="113.6" y="522.8" width="10.7" height="5.1" fill="#f4f4f4"/>
<rect x="230.1" y="527.9" width="9.7" height="5.2" fill="#f4f4f4"/>
<rect x="729" y="419" width="10" height="5" fill="#f4f4f4"/>
<rect x="720" y="427" width="10" height="5" fill="#f4f4f4"/>
<rect x="409.5" y="672" width="9.5" height="4.5" fill="#f4f4f4"/>
<rect x="174.5" y="386" width="10.5" height="5" fill="#f4f4f4"/>
<rect x="169.5" y="398" width="10.5" height="5" fill="#f4f4f4"/>
<rect x="141" y="405" width="10.5" height="5.5" fill="#f4f4f4"/>
<rect x="125" y="411" width="10.5" height="5" fill="#f4f4f4"/>
<rect x="105" y="441.5" width="10.5" height="5.5" fill="#f4f4f4"/>
<rect x="435" y="355" width="14" height="3" fill="#f4f4f4"/>
<rect x="463.7" y="363" width="7" height="2" fill="#f4f4f4"/>
<rect x="502" y="378" width="12" height="3" fill="#f4f4f4"/>
<rect x="473" y="394" width="10" height="3" fill="#f4f4f4"/>
<rect x="423" y="391.6" width="8" height="2" fill="#f4f4f4"/>
<rect x="455" y="410.7" width="4.5" height="2" fill="#f4f4f4"/>
<rect x="463.7" y="407" width="9" height="4" fill="#f4f4f4"/>
<rect x="476.4" y="410.7" width="5" height="2.5" fill="#f4f4f4"/>
<rect x="485" y="410" width="5" height="2.8" fill="#f4f4f4"/>
<rect x="427.6" y="404" width="3" height="3.5" fill="#f4f4f4"/>
<rect x="598.5" y="399" width="8" height="3" fill="#f4f4f4"/>
<rect x="588" y="389.5" width="5" height="2" fill="#f4f4f4"/>
<rect x="583.7" y="412.8" width="4.3" height="2.6" fill="#f4f4f4"/>
<rect x="167" y="352" width="5" height="3" fill="#f4f4f4"/>
<rect x="207" y="356" width="4" height="3" fill="#f4f4f4"/>
<rect x="233" y="357.5" width="6" height="2.5" fill="#f4f4f4"/>
<rect x="296" y="347.5" width="3" height="2.5" fill="#f4f4f4"/>
<rect x="308" y="347" width="4" height="2.5" fill="#f4f4f4"/>
<rect x="354" y="349" width="4" height="2" fill="#f4f4f4"/>
<rect x="388" y="348" width="8" height="2" fill="#f4f4f4"/>
<rect x="440" y="449.5" width="12" height="2.5" fill="#f4f4f4"/>
<rect x="466" y="448" width="10" height="2.5" fill="#f4f4f4"/>
<rect x="483" y="447.5" width="6" height="3" fill="#f4f4f4"/>
<rect x="500" y="449.5" width="8" height="3" fill="#f4f4f4"/>
<rect x="535" y="461" width="8" height="3" fill="#f4f4f4"/>
<rect x="222" y="587.5" width="12" height="2" fill="#f4f4f4"/>
<rect x="268" y="596.5" width="12" height="2" fill="#f4f4f4"/>
<rect x="305" y="605" width="22" height="2.5" fill="#f4f4f4"/>
<rect x="340" y="608.5" width="14" height="2" fill="#f4f4f4"/>
<rect x="372" y="610" width="12" height="2" fill="#f4f4f4"/>
<rect x="418" y="609" width="10" height="2" fill="#f4f4f4"/>
<rect x="452" y="601" width="10" height="2" fill="#f4f4f4"/>
<rect x="520" y="595" width="8" height="2" fill="#f4f4f4"/>
<rect x="640" y="570.5" width="10" height="2" fill="#f4f4f4"/>
<rect x="688" y="585" width="12" height="2" fill="#f4f4f4"/>
<rect x="735" y="595" width="14" height="2.5" fill="#f4f4f4"/>
<rect x="770" y="597" width="12" height="2" fill="#f4f4f4"/>
<rect x="798" y="596" width="10" height="2" fill="#f4f4f4"/>
<rect x="96" y="536" width="8" height="2" fill="#f4f4f4"/>
<rect x="141" y="569" width="10" height="2" fill="#f4f4f4"/>
<rect x="176" y="575" width="10" height="2" fill="#f4f4f4"/>
</svg>
</div>
</div>
<!-- splitter -->
<div id="split">
<div class="a" style="left:832px;top:437px;width:2px;height:2px;background:#8d8f8b"></div><div class="a" style="left:831px;top:438px;width:1px;height:1px;background:#b5b5b5"></div><div class="a" style="left:834px;top:438px;width:1px;height:1px;background:#b5b5b5"></div>
<div class="a" style="left:832px;top:446px;width:2px;height:2px;background:#8d8f8b"></div><div class="a" style="left:831px;top:447px;width:1px;height:1px;background:#b5b5b5"></div><div class="a" style="left:834px;top:447px;width:1px;height:1px;background:#b5b5b5"></div>
<div class="a" style="left:832px;top:455px;width:2px;height:2px;background:#8d8f8b"></div><div class="a" style="left:831px;top:456px;width:1px;height:1px;background:#b5b5b5"></div><div class="a" style="left:834px;top:456px;width:1px;height:1px;background:#b5b5b5"></div>
</div>
<!-- right panel -->
<div id="panel2d">
<!-- outer panel x837..1033 y91..803 -->
<div class="hl dk" style="left:837px;top:91px;width:197px"></div><div class="vl wt" style="left:1034px;top:91px;height:714px"></div>
<div class="vl dk" style="left:837px;top:91px;height:713px"></div>
<div class="vl" style="left:838px;top:92px;height:712px;background:#ededed"></div>
<div class="hl wt" style="left:837px;top:804px;width:198px"></div>
<div class="a" style="left:900.5px;top:101px;width:40px;text-align:center;font-size:11px;line-height:13px;letter-spacing:-0.3px">2D</div>
<svg class="a" style="left:1012px;top:102px" width="12" height="11" viewBox="0 0 12 11"><path d="M2.900,2.400 L9.500,9.100" stroke="#000" stroke-width="2.500" stroke-linecap="round"/><path d="M8.300,1.500 L10.500,2.600 C8.500,5.200 5.500,8.400 3,9.900 L1.100,9.800 C4.200,7.200 6.600,4.200 8.300,1.500Z" fill="#000"/></svg>
<div class="hl dk" style="left:839px;top:123px;width:194px"></div>
<div class="hl wt" style="left:839px;top:124px;width:194px"></div>
<!-- PLAN XY frame x840..1032 y126..727 -->
<div class="hl dk" style="left:840px;top:126px;width:192px"></div>
<div class="vl dk" style="left:840px;top:126px;height:603px"></div>
<div class="vl" style="left:841px;top:127px;height:602px;background:#ededed"></div>
<div class="vl wt" style="left:1032px;top:126px;height:604px"></div>
<div class="hl wt" style="left:840px;top:729px;width:193px"></div>
<div class="ph" style="left:895.5px;top:136px">PLAN XY</div>
<div class="minus" style="left:1007px;top:140px"></div>
<div class="hl dk" style="left:842px;top:158px;width:189px"></div>
<div class="hl wt" style="left:842px;top:159px;width:189px"></div>
<!-- inner frame A x843..1029 y161..726 -->
<div class="hl dk" style="left:843px;top:161px;width:186px"></div>
<div class="vl dk" style="left:843px;top:161px;height:565px"></div>
<div class="vl" style="left:844px;top:162px;height:564px;background:#ededed"></div>
<div class="vl wt" style="left:1029px;top:161px;height:566px"></div>
<div class="hl wt" style="left:843px;top:726px;width:187px"></div>
<!-- inner frame B x845..1027 y163..376 -->
<div class="hl dk" style="left:845px;top:163px;width:182px"></div>
<div class="vl dk" style="left:845px;top:163px;height:214px"></div>
<div class="vl wt" style="left:1027px;top:163px;height:215px"></div>
<div class="hl wt" style="left:845px;top:377px;width:183px"></div>
<!-- Coupe button -->
<div class="a" style="left:849px;top:167px;width:142px;height:24px;border:1px solid #8f928d;border-radius:4px;background:linear-gradient(#d2d3d1 0%,#dadbd9 30%,#e6e6e6 60%,#f2f2f2 100%);box-shadow:0 1px 0 #fafafa,1px 0 0 #f4f4f4"></div>
<div class="a" style="left:849px;top:173px;width:144px;text-align:center;font-size:11px;line-height:13px;letter-spacing:0.5px">Coupe 0</div>
<div class="minus" style="left:1002px;top:177px"></div>
<div class="hl dk" style="left:847px;top:195px;width:178px"></div>
<div class="hl wt" style="left:847px;top:196px;width:178px"></div>
<!-- image frame -->
<div class="a" style="left:849px;top:199px;width:174px;height:174px;background:#f7f7f7"></div>
<div class="hl dk" style="left:849px;top:199px;width:173px;background:#c8c8c8"></div>
<div class="vl" style="left:849px;top:199px;height:173px;background:#c8c8c8"></div>
<div id="brain" class="a" style="left:851px;top:201px;width:170px;height:170px;background:#050505;overflow:hidden">
<svg class="a" style="left:0;top:0" width="170" height="170" viewBox="22 22 780 778">
<rect x="22" y="22" width="782" height="778" fill="#050505"/>
<!-- skull/scalp -->
<path d="M430,62 C520,62 610,95 650,170 C680,240 692,330 674,420 C662,480 632,530 592,572 C562,602 522,622 484,632 L472,700 C462,740 442,765 420,762 C400,760 385,720 378,690 L366,632 C318,625 268,595 233,545 C198,490 168,420 166,360 C166,280 188,180 248,110 C300,75 370,62 430,62 Z" fill="#636363"/>
<path d="M430,70 C514,70 602,101 642,174 C671,242 682,330 665,414 C653,472 626,522 589,561 C559,591 521,611 484,621 L366,621 C320,615 273,588 240,541 C206,488 177,419 175,360 C175,283 196,186 253,116 C304,82 371,70 430,70 Z" fill="#3a3a3a"/>
<path d="M430,86 C508,86 590,114 628,182 C654,246 664,330 648,408 C638,456 612,500 572,524 C542,504 502,452 470,432 C440,420 400,424 370,440 C340,470 318,482 290,472 C240,452 206,402 196,342 C190,274 208,194 264,130 C312,98 372,86 430,86 Z" fill="#3f3f3f" stroke="#2b2b2b" stroke-width="6"/>
<!-- face -->
<path d="M200,430 C215,470 250,500 292,486 C320,488 345,470 372,446 C400,428 440,424 468,436 C500,456 540,508 570,530 C610,510 640,470 652,430 C660,470 640,520 600,560 C570,595 525,615 484,626 L366,626 C320,618 272,590 240,540 C215,500 200,465 200,430 Z" fill="#5c5c5c"/>
<path d="M215,470 C235,520 262,560 300,590 L330,560 C300,540 270,510 250,480 Z" fill="#7d7d7d"/>
<path d="M590,560 C620,530 645,490 655,440 L640,470 C625,510 600,540 572,560 Z" fill="#868686"/>
<path d="M300,560 C320,580 345,585 372,575 L372,615 L330,612 C310,600 300,580 300,560Z" fill="#4a4a4a"/>
<path d="M488,560 C510,550 540,560 560,580 C540,605 510,615 484,618 Z" fill="#828282"/>
<path d="M290,500 L350,470 L372,500 L340,560 L310,550 Z" fill="#6e6e6e"/>
<path d="M480,470 L520,500 L545,545 L500,560 L480,520 Z" fill="#707070"/>
<path d="M296,612 L560,612 L556,626 L300,628 Z" fill="#8a8a8a"/>
<!-- cavity -->
<path d="M382,470 C386,438 472,438 480,480 C487,540 472,602 440,612 C400,612 376,540 382,470Z" fill="#0a0a0a"/>
<path d="M336,400 C350,392 392,396 396,412 C396,432 368,442 350,438 C336,430 330,412 336,400Z" fill="#262626"/>
<path d="M444,408 C456,400 482,404 486,418 C484,436 462,442 450,436 C442,428 440,416 444,408Z" fill="#282828"/>
<rect x="356" y="404" width="22" height="10" fill="#8c8c8c"/>
<!-- nose -->
<path d="M372,628 L480,628 L470,700 C460,740 442,764 420,762 C400,760 386,720 380,690 Z" fill="#6a6a6a"/>
<path d="M396,636 L410,730 L422,742 L438,730 L458,636 L444,636 L424,716 L410,636Z" fill="#1e1e1e"/>
<path d="M418,520 L426,520 L432,630 L440,700 L428,728 L420,700 L414,630Z" fill="#4d4d4d"/>
<path d="M424,640 L446,622 L452,640 L430,712Z" fill="#9a9a9a"/>
<path d="M404,520 L412,520 L410,600 L402,600Z M440,510 L448,510 L446,590 L438,590Z" fill="#555"/>
<!-- tumor -->
<path d="M515,300 C535,284 572,290 584,320 C594,352 586,402 560,432 C545,436 525,402 512,370 C500,340 500,316 515,300Z" fill="#6d6d6d"/>
<path d="M528,318 C545,308 566,318 570,340 C572,366 562,392 550,400 C538,392 524,366 522,344 C522,332 522,324 528,318Z" fill="#4e4e4e"/>
<path d="M534,326 h18 v10 h-18z M540,350 h16 v10h-16z" fill="#666"/>
<!-- specks -->
<g fill="#6a6a6a"><rect x="396" y="290" width="28" height="8"/><rect x="466" y="258" width="22" height="8"/><rect x="350" y="264" width="22" height="8"/><rect x="410" y="246" width="18" height="8"/><rect x="262" y="400" width="16" height="8"/><rect x="480" y="350" width="18" height="6"/><rect x="300" y="430" width="18" height="8"/><rect x="404" y="100" width="44" height="10"/><rect x="340" y="96" width="30" height="8"/></g>
<g fill="#2a2a2a"><path d="M478,232 L500,228 L498,262 L470,262Z"/><rect x="250" y="318" width="30" height="8"/><rect x="280" y="288" width="16" height="10"/><rect x="236" y="180" width="14" height="10"/><rect x="400" y="372" width="8" height="30"/><rect x="350" y="232" width="10" height="10"/></g>
<rect x="408" y="62" width="40" height="14" fill="#0a0a0a"/>
<rect x="690" y="434" width="20" height="6" fill="#1c1c1c"/>
</svg>
</div>
<!-- PLAN XZ x840..1032 y730..765 -->
<div class="hl dk" style="left:840px;top:731px;width:192px"></div>
<div class="vl dk" style="left:840px;top:731px;height:34px"></div>
<div class="vl" style="left:841px;top:732px;height:33px;background:#ededed"></div>
<div class="vl wt" style="left:1032px;top:731px;height:35px"></div>
<div class="hl wt" style="left:840px;top:765px;width:193px"></div>
<div class="ph" style="left:895.5px;top:741px">PLAN XZ</div>
<div class="minus" style="left:1007px;top:745px"></div>
<!-- PLAN YZ y766..801 -->
<div class="hl dk" style="left:840px;top:767px;width:192px"></div>
<div class="vl dk" style="left:840px;top:767px;height:34px"></div>
<div class="vl" style="left:841px;top:768px;height:33px;background:#ededed"></div>
<div class="vl wt" style="left:1032px;top:767px;height:35px"></div>
<div class="hl wt" style="left:840px;top:801px;width:193px"></div>
<div class="ph" style="left:895.5px;top:777px">PLAN YZ</div>
<div class="minus" style="left:1007px;top:781px"></div>
<!-- resize grip -->
<svg class="a" style="left:1022px;top:810px" width="14" height="14" viewBox="2 2 14 14"><path d="M5,16L16,5M9,16L16,9M13,16L16,13" stroke="#a3a6a1" stroke-width="1"/><path d="M6,16L16,6M10,16L16,10M14,16L16,14" stroke="#fff" stroke-width="1"/></svg>
</div>
<!-- statusbar -->
<div class="hl dk" style="left:1px;top:806px;width:1035px"></div><div class="vl dk" style="left:1px;top:806px;height:17px"></div><div class="hl wt" style="left:1px;top:823px;width:1035px"></div>
<div class="a" style="left:2px;top:807px;font-size:13px;line-height:16px;letter-spacing:0.51px;white-space:nowrap">Brins : 87636, Carte : Toutes,&nbsp; Matrice : Toutes, Pas de dernier brin selectionne.</div>
</body></html>
